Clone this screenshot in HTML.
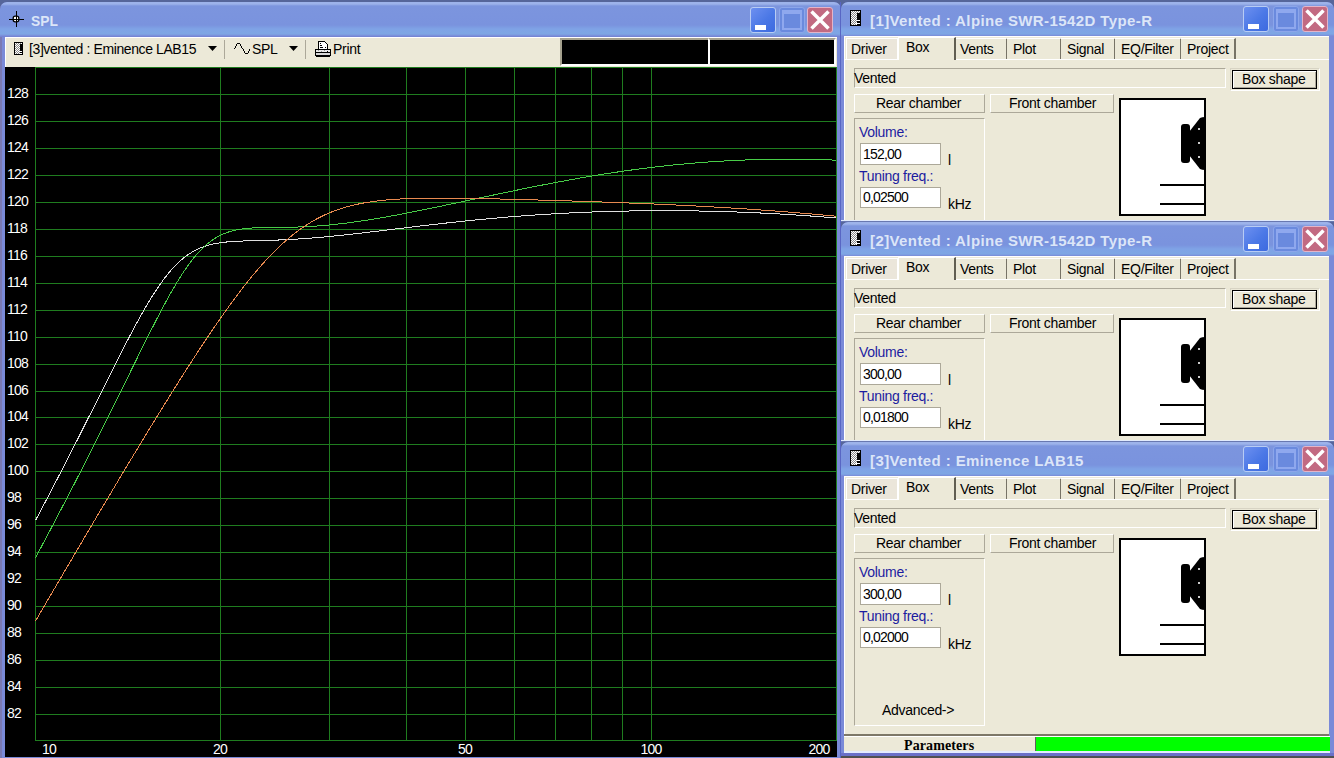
<!DOCTYPE html>
<html><head><meta charset="utf-8"><style>
*{box-sizing:border-box}
html,body{margin:0;padding:0}
body{width:1334px;height:758px;overflow:hidden;position:relative;background:#56669a;font-family:"Liberation Sans",sans-serif;font-size:14px;color:#000}
div{position:absolute}
.t{white-space:nowrap;font-size:14px;letter-spacing:-0.3px;line-height:16px}
.win{background:#7a8ad8;border-radius:7px 7px 0 0;overflow:hidden}
.title{position:absolute;background:linear-gradient(to bottom,#9db3ea 0px,#9db3ea 2px,#7c95de 4px,#7a93de 23px,#7fa3e6 27px,#7ea6e4 32px,#7a8ad8 34px,#7080d0 35px);border-radius:7px 7px 0 0}
.ttext{font-weight:bold;font-size:15px;color:#dce6f8;white-space:nowrap;line-height:18px;letter-spacing:0.4px}
.btn{width:26px;height:26px;border-radius:3px;border:1px solid #b8ccf4}
.bmin{background:linear-gradient(135deg,#6d90f0 0%,#4b78e6 55%,#3d6ae0 100%)}
.bmax{background:#6a8ade;border-color:#8ca6ea}
.bclose{background:#c26a82;border-color:#e4b4c8}
.minglyph{left:4px;top:17px;width:11px;height:5px;background:#fff}
.maxglyph{left:2px;top:2px;width:20px;height:20px;border:2px solid #8fa8ee;border-top-width:4px}
.bclose svg{position:absolute;left:-1px;top:-1px}
.client{background:#ece9d8;border-left:1px solid #fff;border-top:1px solid #fff}
.tab{background:#ece9d8;border-left:1px solid #fff;border-top:1px solid #fff;border-right:2px solid #777366}
.tab.sel{border-right:2px solid #615e52}
.sunk{border-top:1px solid #aca899;border-left:1px solid #aca899;border-right:1px solid #fff;border-bottom:1px solid #fff}
.btn3{background:#ece9d8;border-top:1px solid #fff;border-left:1px solid #fff;border-right:1px solid #aca899;border-bottom:1px solid #aca899}
.boxshape{border:1px solid #000;box-shadow:inset 1px 1px 0 #fff,inset -1px -1px 0 #aca899}
.group{border-top:1px solid #aca899;border-left:1px solid #aca899;border-right:1px solid #fff;border-bottom:1px solid #fff}
.edit{background:#fff;border:1px solid #aca899}
</style></head>
<body>
<div class="win" style="left:0;top:2px;width:841px;height:756px;background:#7a8ad8">
<div style="left:0;top:0;width:2px;height:756px;background:#7a7ab4"></div>
<div class="title" style="left:0;top:0;width:841px;height:35px"></div>
</div>
<svg style="position:absolute;left:0;top:0" width="30" height="30" viewBox="0 0 30 30" shape-rendering="crispEdges"><rect x="13.2" y="16.2" width="5.6" height="5.6" rx="2" fill="#fff" stroke="#000" stroke-width="1.3" shape-rendering="auto"/><rect x="16" y="11" width="1" height="16" fill="#000"/><rect x="9" y="19" width="15" height="1" fill="#000"/></svg>
<div class="ttext" style="left:31px;top:12px;transform:scaleX(0.92);transform-origin:0 0;letter-spacing:0">SPL</div>
<div class="btn bmin" style="left:750px;top:7px"><div class="minglyph"></div></div>
<div class="btn bmax" style="left:779px;top:7px"><div class="maxglyph"></div></div>
<div class="btn bclose" style="left:807px;top:7px"><svg width="26" height="26" viewBox="0 0 26 26"><path d="M4.5 4.5L21.5 21.5M21.5 4.5L4.5 21.5" stroke="#fff" stroke-width="3.5" stroke-linecap="butt"/></svg></div>
<div style="left:5px;top:37px;width:832px;height:30px;background:#ece9d8;border-top:1px solid #fff;border-left:1px solid #fff"></div>
<svg style="position:absolute;left:14px;top:42px" width="9" height="13" viewBox="0 0 9 13" shape-rendering="crispEdges"><rect x="0" y="0" width="9" height="13" fill="#000"/><rect x="1" y="1" width="1" height="1" fill="#fff"/><rect x="2" y="1" width="1" height="1" fill="#8a8a8a"/><rect x="3" y="1" width="1" height="1" fill="#fff"/><rect x="4" y="1" width="1" height="1" fill="#8a8a8a"/><rect x="5" y="1" width="1" height="1" fill="#fff"/><rect x="6" y="1" width="1" height="1" fill="#8a8a8a"/><rect x="7" y="1" width="1" height="1" fill="#fff"/><rect x="1" y="2" width="1" height="1" fill="#8a8a8a"/><rect x="2" y="2" width="1" height="1" fill="#fff"/><rect x="3" y="2" width="1" height="1" fill="#8a8a8a"/><rect x="4" y="2" width="1" height="1" fill="#fff"/><rect x="5" y="2" width="1" height="1" fill="#8a8a8a"/><rect x="1" y="3" width="1" height="1" fill="#fff"/><rect x="2" y="3" width="1" height="1" fill="#8a8a8a"/><rect x="3" y="3" width="1" height="1" fill="#fff"/><rect x="4" y="3" width="1" height="1" fill="#8a8a8a"/><rect x="5" y="3" width="1" height="1" fill="#fff"/><rect x="1" y="4" width="1" height="1" fill="#8a8a8a"/><rect x="2" y="4" width="1" height="1" fill="#fff"/><rect x="3" y="4" width="1" height="1" fill="#8a8a8a"/><rect x="4" y="4" width="1" height="1" fill="#fff"/><rect x="5" y="4" width="1" height="1" fill="#8a8a8a"/><rect x="1" y="5" width="1" height="1" fill="#fff"/><rect x="2" y="5" width="1" height="1" fill="#8a8a8a"/><rect x="3" y="5" width="1" height="1" fill="#fff"/><rect x="4" y="5" width="1" height="1" fill="#8a8a8a"/><rect x="5" y="5" width="1" height="1" fill="#fff"/><rect x="1" y="6" width="1" height="1" fill="#8a8a8a"/><rect x="2" y="6" width="1" height="1" fill="#fff"/><rect x="3" y="6" width="1" height="1" fill="#8a8a8a"/><rect x="4" y="6" width="1" height="1" fill="#fff"/><rect x="5" y="6" width="1" height="1" fill="#8a8a8a"/><rect x="1" y="7" width="1" height="1" fill="#fff"/><rect x="2" y="7" width="1" height="1" fill="#8a8a8a"/><rect x="3" y="7" width="1" height="1" fill="#fff"/><rect x="4" y="7" width="1" height="1" fill="#8a8a8a"/><rect x="5" y="7" width="1" height="1" fill="#fff"/><rect x="1" y="8" width="1" height="1" fill="#8a8a8a"/><rect x="2" y="8" width="1" height="1" fill="#fff"/><rect x="3" y="8" width="1" height="1" fill="#8a8a8a"/><rect x="4" y="8" width="1" height="1" fill="#fff"/><rect x="5" y="8" width="1" height="1" fill="#8a8a8a"/><rect x="1" y="9" width="1" height="1" fill="#fff"/><rect x="2" y="9" width="1" height="1" fill="#8a8a8a"/><rect x="3" y="9" width="1" height="1" fill="#fff"/><rect x="4" y="9" width="1" height="1" fill="#8a8a8a"/><rect x="5" y="9" width="1" height="1" fill="#fff"/><rect x="1" y="10" width="1" height="1" fill="#8a8a8a"/><rect x="2" y="10" width="1" height="1" fill="#fff"/><rect x="3" y="10" width="1" height="1" fill="#8a8a8a"/><rect x="4" y="10" width="1" height="1" fill="#fff"/><rect x="5" y="10" width="1" height="1" fill="#8a8a8a"/><rect x="1" y="11" width="1" height="1" fill="#fff"/><rect x="2" y="11" width="1" height="1" fill="#8a8a8a"/><rect x="3" y="11" width="1" height="1" fill="#fff"/><rect x="4" y="11" width="1" height="1" fill="#8a8a8a"/><rect x="5" y="11" width="1" height="1" fill="#fff"/><rect x="5" y="9" width="3" height="1" fill="#fff"/><rect x="5" y="11" width="3" height="1" fill="#fff"/></svg>
<div class="t" style="left:29px;top:41px;letter-spacing:-0.4px">[3]vented : Eminence LAB15</div>
<svg style="position:absolute;left:208px;top:46px" width="9" height="5" viewBox="0 0 9 5"><path d="M0 0H9L4.5 5Z" fill="#000"/></svg>
<div style="left:224px;top:40px;width:1px;height:19px;background:#aca899"></div>
<svg style="position:absolute;left:0;top:0" width="260" height="60" viewBox="0 0 260 60" shape-rendering="crispEdges"><g fill="#000"><rect x="234" y="48" width="1" height="1"/><rect x="235" y="46" width="1" height="2"/><rect x="236" y="44" width="1" height="2"/><rect x="237" y="43" width="3" height="1"/><rect x="240" y="44" width="1" height="2"/><rect x="241" y="46" width="1" height="2"/><rect x="242" y="48" width="1" height="1"/><rect x="243" y="49" width="1" height="2"/><rect x="244" y="51" width="1" height="2"/><rect x="245" y="53" width="3" height="1"/><rect x="248" y="51" width="1" height="2"/><rect x="249" y="49" width="1" height="2"/></g></svg>
<div class="t" style="left:252px;top:41px;">SPL</div>
<svg style="position:absolute;left:289px;top:46px" width="9" height="5" viewBox="0 0 9 5"><path d="M0 0H9L4.5 5Z" fill="#000"/></svg>
<div style="left:305px;top:40px;width:1px;height:19px;background:#aca899"></div>
<svg style="position:absolute;left:0;top:0" width="340" height="60" viewBox="0 0 340 60" shape-rendering="crispEdges">
<path d="M318.5 41.5H324.5L327.5 44.5V49.5H318.5Z" fill="#fff" stroke="#000"/>
<rect x="320" y="43" width="1" height="1" fill="#000"/><rect x="320" y="45" width="2" height="1" fill="#000"/><rect x="320" y="47" width="3" height="1" fill="#000"/><rect x="325" y="47" width="1" height="1" fill="#000"/>
<path d="M315.5 49.5H330.5V55.5H315.5Z" fill="#fff" stroke="#000"/>
<rect x="316" y="50" width="14" height="2" fill="#e8e8e8"/><rect x="318" y="50" width="1" height="1" fill="#999"/><rect x="321" y="51" width="1" height="1" fill="#999"/><rect x="324" y="50" width="1" height="1" fill="#999"/><rect x="327" y="51" width="1" height="1" fill="#000"/>
<rect x="316" y="52" width="14" height="1" fill="#000"/><rect x="316" y="53" width="14" height="2" fill="#d8d8d8"/><rect x="316" y="56" width="14" height="1" fill="#000"/>
</svg>
<div class="t" style="left:333px;top:41px;">Print</div>
<div style="left:560px;top:38px;width:148px;height:28px;background:#000;border-top:2px solid #a5a18e;border-left:2px solid #a5a18e;border-bottom:2px solid #fff"></div>
<div style="left:708px;top:38px;width:128px;height:28px;background:#000;border-top:2px solid #a5a18e;border-left:2px solid #fff;border-bottom:2px solid #fff;border-right:2px solid #fff"></div>
<svg style="position:absolute;left:5px;top:67px" width="832" height="690" viewBox="5 67 832 690">
<rect x="5" y="67" width="832" height="690" fill="#000"/>
<rect x="35" y="67" width="802" height="1" fill="#1f7c1f"/><rect x="35" y="94" width="802" height="1" fill="#1f7c1f"/><rect x="35" y="121" width="802" height="1" fill="#1f7c1f"/><rect x="35" y="148" width="802" height="1" fill="#1f7c1f"/><rect x="35" y="175" width="802" height="1" fill="#1f7c1f"/><rect x="35" y="202" width="802" height="1" fill="#1f7c1f"/><rect x="35" y="229" width="802" height="1" fill="#1f7c1f"/><rect x="35" y="256" width="802" height="1" fill="#1f7c1f"/><rect x="35" y="283" width="802" height="1" fill="#1f7c1f"/><rect x="35" y="310" width="802" height="1" fill="#1f7c1f"/><rect x="35" y="337" width="802" height="1" fill="#1f7c1f"/><rect x="35" y="364" width="802" height="1" fill="#1f7c1f"/><rect x="35" y="391" width="802" height="1" fill="#1f7c1f"/><rect x="35" y="417" width="802" height="1" fill="#1f7c1f"/><rect x="35" y="444" width="802" height="1" fill="#1f7c1f"/><rect x="35" y="471" width="802" height="1" fill="#1f7c1f"/><rect x="35" y="498" width="802" height="1" fill="#1f7c1f"/><rect x="35" y="525" width="802" height="1" fill="#1f7c1f"/><rect x="35" y="552" width="802" height="1" fill="#1f7c1f"/><rect x="35" y="579" width="802" height="1" fill="#1f7c1f"/><rect x="35" y="606" width="802" height="1" fill="#1f7c1f"/><rect x="35" y="633" width="802" height="1" fill="#1f7c1f"/><rect x="35" y="660" width="802" height="1" fill="#1f7c1f"/><rect x="35" y="687" width="802" height="1" fill="#1f7c1f"/><rect x="35" y="714" width="802" height="1" fill="#1f7c1f"/><rect x="35" y="740" width="802" height="1" fill="#1f7c1f"/><rect x="35" y="67" width="1" height="674" fill="#1f7c1f"/><rect x="220" y="67" width="1" height="674" fill="#1f7c1f"/><rect x="329" y="67" width="1" height="674" fill="#1f7c1f"/><rect x="406" y="67" width="1" height="674" fill="#1f7c1f"/><rect x="465" y="67" width="1" height="674" fill="#1f7c1f"/><rect x="514" y="67" width="1" height="674" fill="#1f7c1f"/><rect x="555" y="67" width="1" height="674" fill="#1f7c1f"/><rect x="591" y="67" width="1" height="674" fill="#1f7c1f"/><rect x="622" y="67" width="1" height="674" fill="#1f7c1f"/><rect x="651" y="67" width="1" height="674" fill="#1f7c1f"/><rect x="836" y="67" width="1" height="674" fill="#1f7c1f"/>
<g fill="#fff" font-family="Liberation Sans" font-size="14" letter-spacing="-0.8"><text x="7" y="98">128</text><text x="7" y="125">126</text><text x="7" y="152">124</text><text x="7" y="179">122</text><text x="7" y="206">120</text><text x="7" y="233">118</text><text x="7" y="260">116</text><text x="7" y="287">114</text><text x="7" y="314">112</text><text x="7" y="341">110</text><text x="7" y="368">108</text><text x="7" y="395">106</text><text x="7" y="421">104</text><text x="7" y="448">102</text><text x="7" y="475">100</text><text x="7" y="502">98</text><text x="7" y="529">96</text><text x="7" y="556">94</text><text x="7" y="583">92</text><text x="7" y="610">90</text><text x="7" y="637">88</text><text x="7" y="664">86</text><text x="7" y="691">84</text><text x="7" y="718">82</text><text x="49" y="754" text-anchor="middle">10</text><text x="220" y="754" text-anchor="middle">20</text><text x="465" y="754" text-anchor="middle">50</text><text x="651" y="754" text-anchor="middle">100</text><text x="819" y="754" text-anchor="middle">200</text></g>
<g fill="none" stroke-width="1" shape-rendering="crispEdges">
<polyline stroke="#e0e0e0" points="35.5,520.48 36.0,519.53 36.5,518.59 37.0,517.65 37.5,516.70 38.0,515.76 38.5,514.81 39.0,513.87 39.5,512.92 40.0,511.97 40.5,511.03 41.0,510.08 41.5,509.13 42.0,508.18 42.5,507.23 43.0,506.28 43.5,505.33 44.0,504.38 44.5,503.43 45.0,502.48 45.5,501.52 46.0,500.57 46.5,499.62 47.0,498.66 47.5,497.71 48.0,496.75 48.5,495.80 49.0,494.84 49.5,493.88 50.0,492.92 50.5,491.97 51.0,491.01 51.5,490.05 52.0,489.09 52.5,488.13 53.0,487.17 53.5,486.21 54.0,485.24 54.5,484.28 55.0,483.32 55.5,482.35 56.0,481.39 56.5,480.42 57.0,479.46 57.5,478.49 58.0,477.53 58.5,476.56 59.0,475.59 59.5,474.62 60.0,473.66 60.5,472.69 61.0,471.72 61.5,470.75 62.0,469.78 62.5,468.81 63.0,467.83 63.5,466.86 64.0,465.89 64.5,464.92 65.0,463.94 65.5,462.97 66.0,461.99 66.5,461.02 67.0,460.04 67.5,459.06 68.0,458.09 68.5,457.11 69.0,456.13 69.5,455.15 70.0,454.17 70.5,453.19 71.0,452.21 71.5,451.23 72.0,450.25 72.5,449.27 73.0,448.29 73.5,447.31 74.0,446.32 74.5,445.34 75.0,444.35 75.5,443.37 76.0,442.39 76.5,441.40 77.0,440.41 77.5,439.43 78.0,438.44 78.5,437.45 79.0,436.47 79.5,435.48 80.0,434.49 80.5,433.50 81.0,432.51 81.5,431.52 82.0,430.53 82.5,429.54 83.0,428.55 83.5,427.56 84.0,426.56 84.5,425.57 85.0,424.58 85.5,423.59 86.0,422.59 86.5,421.60 87.0,420.61 87.5,419.61 88.0,418.62 88.5,417.62 89.0,416.63 89.5,415.63 90.0,414.64 90.5,413.64 91.0,412.64 91.5,411.65 92.0,410.65 92.5,409.65 93.0,408.66 93.5,407.66 94.0,406.66 94.5,405.66 95.0,404.66 95.5,403.67 96.0,402.67 96.5,401.67 97.0,400.67 97.5,399.67 98.0,398.67 98.5,397.67 99.0,396.68 99.5,395.68 100.0,394.68 100.5,393.68 101.0,392.68 101.5,391.68 102.0,390.68 102.5,389.68 103.0,388.68 103.5,387.69 104.0,386.69 104.5,385.69 105.0,384.69 105.5,383.69 106.0,382.69 106.5,381.70 107.0,380.70 107.5,379.70 108.0,378.71 108.5,377.71 109.0,376.71 109.5,375.72 110.0,374.72 110.5,373.73 111.0,372.73 111.5,371.74 112.0,370.75 112.5,369.75 113.0,368.76 113.5,367.77 114.0,366.78 114.5,365.79 115.0,364.80 115.5,363.81 116.0,362.82 116.5,361.83 117.0,360.85 117.5,359.86 118.0,358.88 118.5,357.89 119.0,356.91 119.5,355.93 120.0,354.95 120.5,353.97 121.0,352.99 121.5,352.01 122.0,351.03 122.5,350.06 123.0,349.09 123.5,348.11 124.0,347.14 124.5,346.17 125.0,345.20 125.5,344.24 126.0,343.27 126.5,342.31 127.0,341.35 127.5,340.39 128.0,339.43 128.5,338.47 129.0,337.52 129.5,336.56 130.0,335.61 130.5,334.66 131.0,333.72 131.5,332.77 132.0,331.83 132.5,330.89 133.0,329.95 133.5,329.02 134.0,328.08 134.5,327.15 135.0,326.22 135.5,325.30 136.0,324.38 136.5,323.46 137.0,322.54 137.5,321.62 138.0,320.71 138.5,319.80 139.0,318.90 139.5,317.99 140.0,317.09 140.5,316.20 141.0,315.31 141.5,314.42 142.0,313.53 142.5,312.65 143.0,311.77 143.5,310.89 144.0,310.02 144.5,309.15 145.0,308.29 145.5,307.43 146.0,306.57 146.5,305.72 147.0,304.87 147.5,304.03 148.0,303.19 148.5,302.35 149.0,301.52 149.5,300.70 150.0,299.87 150.5,299.06 151.0,298.24 151.5,297.44 152.0,296.63 152.5,295.84 153.0,295.04 153.5,294.25 154.0,293.47 154.5,292.69 155.0,291.92 155.5,291.15 156.0,290.39 156.5,289.64 157.0,288.88 157.5,288.14 158.0,287.40 158.5,286.66 159.0,285.94 159.5,285.21 160.0,284.50 160.5,283.79 161.0,283.08 161.5,282.38 162.0,281.69 162.5,281.00 163.0,280.32 163.5,279.65 164.0,278.98 164.5,278.32 165.0,277.66 165.5,277.01 166.0,276.37 166.5,275.73 167.0,275.11 167.5,274.48 168.0,273.87 168.5,273.26 169.0,272.65 169.5,272.06 170.0,271.47 170.5,270.88 171.0,270.31 171.5,269.74 172.0,269.18 172.5,268.62 173.0,268.07 173.5,267.53 174.0,266.99 174.5,266.46 175.0,265.94 175.5,265.43 176.0,264.92 176.5,264.42 177.0,263.92 177.5,263.44 178.0,262.96 178.5,262.48 179.0,262.02 179.5,261.56 180.0,261.10 180.5,260.66 181.0,260.22 181.5,259.78 182.0,259.36 182.5,258.94 183.0,258.52 183.5,258.12 184.0,257.72 184.5,257.33 185.0,256.94 185.5,256.56 186.0,256.18 186.5,255.82 187.0,255.46 187.5,255.10 188.0,254.75 188.5,254.41 189.0,254.08 189.5,253.75 190.0,253.42 190.5,253.11 191.0,252.79 191.5,252.49 192.0,252.19 192.5,251.89 193.0,251.61 193.5,251.32 194.0,251.05 194.5,250.78 195.0,250.51 195.5,250.25 196.0,250.00 196.5,249.75 197.0,249.50 197.5,249.26 198.0,249.03 198.5,248.80 199.0,248.58 199.5,248.36 200.0,248.14 200.5,247.93 201.0,247.73 201.5,247.53 202.0,247.34 202.5,247.14 203.0,246.96 203.5,246.78 204.0,246.60 204.5,246.43 205.0,246.26 205.5,246.09 206.0,245.93 206.5,245.77 207.0,245.62 207.5,245.47 208.0,245.33 208.5,245.18 209.0,245.05 209.5,244.91 210.0,244.78 210.5,244.65 211.0,244.53 211.5,244.41 212.0,244.29 212.5,244.17 213.0,244.06 213.5,243.95 214.0,243.85 214.5,243.75 215.0,243.65 215.5,243.55 216.0,243.46 216.5,243.36 217.0,243.28 217.5,243.19 218.0,243.10 218.5,243.02 219.0,242.94 219.5,242.87 220.0,242.79 220.5,242.72 221.0,242.65 221.5,242.58 222.0,242.52 222.5,242.45 223.0,242.39 223.5,242.33 224.0,242.27 224.5,242.22 225.0,242.16 225.5,242.11 226.0,242.06 226.5,242.01 227.0,241.96 227.5,241.91 228.0,241.87 228.5,241.82 229.0,241.78 229.5,241.74 230.0,241.70 230.5,241.66 231.0,241.63 231.5,241.59 232.0,241.56 232.5,241.52 233.0,241.49 233.5,241.46 234.0,241.43 234.5,241.40 235.0,241.37 235.5,241.34 236.0,241.32 236.5,241.29 237.0,241.26 237.5,241.24 238.0,241.22 238.5,241.19 239.0,241.17 239.5,241.15 240.0,241.13 240.5,241.11 241.0,241.09 241.5,241.07 242.0,241.05 242.5,241.03 243.0,241.02 243.5,241.00 244.0,240.98 244.5,240.97 245.0,240.95 245.5,240.94 246.0,240.92 246.5,240.91 247.0,240.89 247.5,240.88 248.0,240.86 248.5,240.85 249.0,240.84 249.5,240.82 250.0,240.81 250.5,240.80 251.0,240.79 251.5,240.77 252.0,240.76 252.5,240.75 253.0,240.74 253.5,240.73 254.0,240.71 254.5,240.70 255.0,240.69 255.5,240.68 256.0,240.67 256.5,240.65 257.0,240.64 257.5,240.63 258.0,240.62 258.5,240.61 259.0,240.60 259.5,240.58 260.0,240.57 260.5,240.56 261.0,240.55 261.5,240.54 262.0,240.52 262.5,240.51 263.0,240.50 263.5,240.49 264.0,240.47 264.5,240.46 265.0,240.45 265.5,240.43 266.0,240.42 266.5,240.41 267.0,240.39 267.5,240.38 268.0,240.37 268.5,240.35 269.0,240.34 269.5,240.32 270.0,240.31 270.5,240.29 271.0,240.28 271.5,240.26 272.0,240.24 272.5,240.23 273.0,240.21 273.5,240.20 274.0,240.18 274.5,240.16 275.0,240.14 275.5,240.13 276.0,240.11 276.5,240.09 277.0,240.07 277.5,240.05 278.0,240.03 278.5,240.01 279.0,239.99 279.5,239.97 280.0,239.95 280.5,239.93 281.0,239.91 281.5,239.89 282.0,239.87 282.5,239.85 283.0,239.83 283.5,239.80 284.0,239.78 284.5,239.76 285.0,239.74 285.5,239.71 286.0,239.69 286.5,239.66 287.0,239.64 287.5,239.62 288.0,239.59 288.5,239.56 289.0,239.54 289.5,239.51 290.0,239.49 290.5,239.46 291.0,239.43 291.5,239.41 292.0,239.38 292.5,239.35 293.0,239.32 293.5,239.29 294.0,239.26 294.5,239.24 295.0,239.21 295.5,239.18 296.0,239.15 296.5,239.12 297.0,239.09 297.5,239.05 298.0,239.02 298.5,238.99 299.0,238.96 299.5,238.93 300.0,238.89 300.5,238.86 301.0,238.83 301.5,238.80 302.0,238.76 302.5,238.73 303.0,238.69 303.5,238.66 304.0,238.62 304.5,238.59 305.0,238.55 305.5,238.52 306.0,238.48 306.5,238.44 307.0,238.41 307.5,238.37 308.0,238.33 308.5,238.30 309.0,238.26 309.5,238.22 310.0,238.18 310.5,238.14 311.0,238.10 311.5,238.06 312.0,238.02 312.5,237.98 313.0,237.94 313.5,237.90 314.0,237.86 314.5,237.82 315.0,237.78 315.5,237.74 316.0,237.70 316.5,237.66 317.0,237.61 317.5,237.57 318.0,237.53 318.5,237.49 319.0,237.44 319.5,237.40 320.0,237.36 320.5,237.31 321.0,237.27 321.5,237.22 322.0,237.18 322.5,237.13 323.0,237.09 323.5,237.04 324.0,237.00 324.5,236.95 325.0,236.91 325.5,236.86 326.0,236.81 326.5,236.77 327.0,236.72 327.5,236.67 328.0,236.62 328.5,236.58 329.0,236.53 329.5,236.48 330.0,236.43 330.5,236.38 331.0,236.33 331.5,236.29 332.0,236.24 332.5,236.19 333.0,236.14 333.5,236.09 334.0,236.04 334.5,235.99 335.0,235.94 335.5,235.89 336.0,235.84 336.5,235.79 337.0,235.73 337.5,235.68 338.0,235.63 338.5,235.58 339.0,235.53 339.5,235.48 340.0,235.42 340.5,235.37 341.0,235.32 341.5,235.27 342.0,235.21 342.5,235.16 343.0,235.11 343.5,235.05 344.0,235.00 344.5,234.95 345.0,234.89 345.5,234.84 346.0,234.79 346.5,234.73 347.0,234.68 347.5,234.62 348.0,234.57 348.5,234.51 349.0,234.46 349.5,234.40 350.0,234.35 350.5,234.29 351.0,234.24 351.5,234.18 352.0,234.13 352.5,234.07 353.0,234.01 353.5,233.96 354.0,233.90 354.5,233.85 355.0,233.79 355.5,233.73 356.0,233.68 356.5,233.62 357.0,233.56 357.5,233.51 358.0,233.45 358.5,233.39 359.0,233.33 359.5,233.28 360.0,233.22 360.5,233.16 361.0,233.10 361.5,233.05 362.0,232.99 362.5,232.93 363.0,232.87 363.5,232.81 364.0,232.76 364.5,232.70 365.0,232.64 365.5,232.58 366.0,232.52 366.5,232.46 367.0,232.41 367.5,232.35 368.0,232.29 368.5,232.23 369.0,232.17 369.5,232.11 370.0,232.05 370.5,231.99 371.0,231.93 371.5,231.87 372.0,231.82 372.5,231.76 373.0,231.70 373.5,231.64 374.0,231.58 374.5,231.52 375.0,231.46 375.5,231.40 376.0,231.34 376.5,231.28 377.0,231.22 377.5,231.16 378.0,231.10 378.5,231.04 379.0,230.98 379.5,230.92 380.0,230.86 380.5,230.80 381.0,230.74 381.5,230.68 382.0,230.62 382.5,230.56 383.0,230.50 383.5,230.44 384.0,230.38 384.5,230.32 385.0,230.26 385.5,230.20 386.0,230.14 386.5,230.07 387.0,230.01 387.5,229.95 388.0,229.89 388.5,229.83 389.0,229.77 389.5,229.71 390.0,229.65 390.5,229.59 391.0,229.53 391.5,229.47 392.0,229.41 392.5,229.35 393.0,229.29 393.5,229.23 394.0,229.17 394.5,229.11 395.0,229.05 395.5,228.98 396.0,228.92 396.5,228.86 397.0,228.80 397.5,228.74 398.0,228.68 398.5,228.62 399.0,228.56 399.5,228.50 400.0,228.44 400.5,228.38 401.0,228.32 401.5,228.26 402.0,228.20 402.5,228.14 403.0,228.08 403.5,228.02 404.0,227.96 404.5,227.90 405.0,227.84 405.5,227.78 406.0,227.72 406.5,227.66 407.0,227.60 407.5,227.54 408.0,227.48 408.5,227.42 409.0,227.36 409.5,227.29 410.0,227.24 410.5,227.18 411.0,227.12 411.5,227.06 412.0,227.00 412.5,226.94 413.0,226.88 413.5,226.82 414.0,226.76 414.5,226.70 415.0,226.64 415.5,226.58 416.0,226.52 416.5,226.46 417.0,226.40 417.5,226.34 418.0,226.28 418.5,226.22 419.0,226.16 419.5,226.10 420.0,226.04 420.5,225.99 421.0,225.93 421.5,225.87 422.0,225.81 422.5,225.75 423.0,225.69 423.5,225.63 424.0,225.57 424.5,225.52 425.0,225.46 425.5,225.40 426.0,225.34 426.5,225.28 427.0,225.22 427.5,225.17 428.0,225.11 428.5,225.05 429.0,224.99 429.5,224.93 430.0,224.88 430.5,224.82 431.0,224.76 431.5,224.70 432.0,224.64 432.5,224.59 433.0,224.53 433.5,224.47 434.0,224.42 434.5,224.36 435.0,224.30 435.5,224.24 436.0,224.19 436.5,224.13 437.0,224.07 437.5,224.02 438.0,223.96 438.5,223.90 439.0,223.85 439.5,223.79 440.0,223.73 440.5,223.68 441.0,223.62 441.5,223.57 442.0,223.51 442.5,223.45 443.0,223.40 443.5,223.34 444.0,223.29 444.5,223.23 445.0,223.18 445.5,223.12 446.0,223.06 446.5,223.01 447.0,222.95 447.5,222.90 448.0,222.84 448.5,222.79 449.0,222.73 449.5,222.68 450.0,222.63 450.5,222.57 451.0,222.52 451.5,222.46 452.0,222.41 452.5,222.35 453.0,222.30 453.5,222.25 454.0,222.19 454.5,222.14 455.0,222.09 455.5,222.03 456.0,221.98 456.5,221.93 457.0,221.87 457.5,221.82 458.0,221.77 458.5,221.71 459.0,221.66 459.5,221.61 460.0,221.55 460.5,221.50 461.0,221.45 461.5,221.40 462.0,221.35 462.5,221.29 463.0,221.24 463.5,221.19 464.0,221.14 464.5,221.09 465.0,221.03 465.5,220.98 466.0,220.93 466.5,220.88 467.0,220.83 467.5,220.78 468.0,220.73 468.5,220.68 469.0,220.63 469.5,220.58 470.0,220.53 470.5,220.48 471.0,220.43 471.5,220.37 472.0,220.32 472.5,220.28 473.0,220.23 473.5,220.18 474.0,220.13 474.5,220.08 475.0,220.03 475.5,219.98 476.0,219.93 476.5,219.88 477.0,219.83 477.5,219.78 478.0,219.73 478.5,219.69 479.0,219.64 479.5,219.59 480.0,219.54 480.5,219.49 481.0,219.44 481.5,219.40 482.0,219.35 482.5,219.30 483.0,219.25 483.5,219.21 484.0,219.16 484.5,219.11 485.0,219.07 485.5,219.02 486.0,218.97 486.5,218.93 487.0,218.88 487.5,218.83 488.0,218.79 488.5,218.74 489.0,218.69 489.5,218.65 490.0,218.60 490.5,218.56 491.0,218.51 491.5,218.47 492.0,218.42 492.5,218.38 493.0,218.33 493.5,218.29 494.0,218.24 494.5,218.20 495.0,218.15 495.5,218.11 496.0,218.06 496.5,218.02 497.0,217.98 497.5,217.93 498.0,217.89 498.5,217.84 499.0,217.80 499.5,217.76 500.0,217.71 500.5,217.67 501.0,217.63 501.5,217.59 502.0,217.54 502.5,217.50 503.0,217.46 503.5,217.42 504.0,217.37 504.5,217.33 505.0,217.29 505.5,217.25 506.0,217.21 506.5,217.16 507.0,217.12 507.5,217.08 508.0,217.04 508.5,217.00 509.0,216.96 509.5,216.92 510.0,216.88 510.5,216.84 511.0,216.80 511.5,216.76 512.0,216.72 512.5,216.68 513.0,216.64 513.5,216.60 514.0,216.56 514.5,216.52 515.0,216.48 515.5,216.44 516.0,216.40 516.5,216.36 517.0,216.32 517.5,216.28 518.0,216.24 518.5,216.21 519.0,216.17 519.5,216.13 520.0,216.09 520.5,216.05 521.0,216.02 521.5,215.98 522.0,215.94 522.5,215.90 523.0,215.87 523.5,215.83 524.0,215.79 524.5,215.75 525.0,215.72 525.5,215.68 526.0,215.65 526.5,215.61 527.0,215.57 527.5,215.54 528.0,215.50 528.5,215.46 529.0,215.43 529.5,215.39 530.0,215.36 530.5,215.32 531.0,215.29 531.5,215.25 532.0,215.22 532.5,215.18 533.0,215.15 533.5,215.11 534.0,215.08 534.5,215.05 535.0,215.01 535.5,214.98 536.0,214.94 536.5,214.91 537.0,214.88 537.5,214.84 538.0,214.81 538.5,214.78 539.0,214.74 539.5,214.71 540.0,214.68 540.5,214.65 541.0,214.61 541.5,214.58 542.0,214.55 542.5,214.52 543.0,214.49 543.5,214.45 544.0,214.42 544.5,214.39 545.0,214.36 545.5,214.33 546.0,214.30 546.5,214.27 547.0,214.24 547.5,214.20 548.0,214.17 548.5,214.14 549.0,214.11 549.5,214.08 550.0,214.05 550.5,214.02 551.0,213.99 551.5,213.96 552.0,213.93 552.5,213.91 553.0,213.88 553.5,213.85 554.0,213.82 554.5,213.79 555.0,213.76 555.5,213.73 556.0,213.70 556.5,213.68 557.0,213.65 557.5,213.62 558.0,213.59 558.5,213.56 559.0,213.54 559.5,213.51 560.0,213.48 560.5,213.45 561.0,213.43 561.5,213.40 562.0,213.37 562.5,213.35 563.0,213.32 563.5,213.29 564.0,213.27 564.5,213.24 565.0,213.22 565.5,213.19 566.0,213.16 566.5,213.14 567.0,213.11 567.5,213.09 568.0,213.06 568.5,213.04 569.0,213.01 569.5,212.99 570.0,212.96 570.5,212.94 571.0,212.92 571.5,212.89 572.0,212.87 572.5,212.84 573.0,212.82 573.5,212.80 574.0,212.77 574.5,212.75 575.0,212.73 575.5,212.70 576.0,212.68 576.5,212.66 577.0,212.63 577.5,212.61 578.0,212.59 578.5,212.57 579.0,212.54 579.5,212.52 580.0,212.50 580.5,212.48 581.0,212.46 581.5,212.44 582.0,212.41 582.5,212.39 583.0,212.37 583.5,212.35 584.0,212.33 584.5,212.31 585.0,212.29 585.5,212.27 586.0,212.25 586.5,212.23 587.0,212.21 587.5,212.19 588.0,212.17 588.5,212.15 589.0,212.13 589.5,212.11 590.0,212.09 590.5,212.07 591.0,212.05 591.5,212.03 592.0,212.01 592.5,212.00 593.0,211.98 593.5,211.96 594.0,211.94 594.5,211.92 595.0,211.91 595.5,211.89 596.0,211.87 596.5,211.85 597.0,211.83 597.5,211.82 598.0,211.80 598.5,211.78 599.0,211.77 599.5,211.75 600.0,211.73 600.5,211.72 601.0,211.70 601.5,211.68 602.0,211.67 602.5,211.65 603.0,211.64 603.5,211.62 604.0,211.61 604.5,211.59 605.0,211.58 605.5,211.56 606.0,211.54 606.5,211.53 607.0,211.52 607.5,211.50 608.0,211.49 608.5,211.47 609.0,211.46 609.5,211.44 610.0,211.43 610.5,211.42 611.0,211.40 611.5,211.39 612.0,211.38 612.5,211.36 613.0,211.35 613.5,211.34 614.0,211.32 614.5,211.31 615.0,211.30 615.5,211.29 616.0,211.27 616.5,211.26 617.0,211.25 617.5,211.24 618.0,211.22 618.5,211.21 619.0,211.20 619.5,211.19 620.0,211.18 620.5,211.17 621.0,211.16 621.5,211.15 622.0,211.13 622.5,211.12 623.0,211.11 623.5,211.10 624.0,211.09 624.5,211.08 625.0,211.07 625.5,211.06 626.0,211.05 626.5,211.04 627.0,211.03 627.5,211.02 628.0,211.02 628.5,211.01 629.0,211.00 629.5,210.99 630.0,210.98 630.5,210.97 631.0,210.96 631.5,210.95 632.0,210.95 632.5,210.94 633.0,210.93 633.5,210.92 634.0,210.91 634.5,210.91 635.0,210.90 635.5,210.89 636.0,210.89 636.5,210.88 637.0,210.87 637.5,210.86 638.0,210.86 638.5,210.85 639.0,210.84 639.5,210.84 640.0,210.83 640.5,210.83 641.0,210.82 641.5,210.81 642.0,210.81 642.5,210.80 643.0,210.80 643.5,210.79 644.0,210.79 644.5,210.78 645.0,210.78 645.5,210.77 646.0,210.77 646.5,210.76 647.0,210.76 647.5,210.76 648.0,210.75 648.5,210.75 649.0,210.74 649.5,210.74 650.0,210.74 650.5,210.73 651.0,210.73 651.5,210.73 652.0,210.72 652.5,210.72 653.0,210.72 653.5,210.71 654.0,210.71 654.5,210.71 655.0,210.71 655.5,210.71 656.0,210.70 656.5,210.70 657.0,210.70 657.5,210.70 658.0,210.70 658.5,210.70 659.0,210.69 659.5,210.69 660.0,210.69 660.5,210.69 661.0,210.69 661.5,210.69 662.0,210.69 662.5,210.69 663.0,210.69 663.5,210.69 664.0,210.69 664.5,210.69 665.0,210.69 665.5,210.69 666.0,210.69 666.5,210.69 667.0,210.69 667.5,210.69 668.0,210.69 668.5,210.69 669.0,210.69 669.5,210.70 670.0,210.70 670.5,210.70 671.0,210.70 671.5,210.70 672.0,210.70 672.5,210.71 673.0,210.71 673.5,210.71 674.0,210.71 674.5,210.72 675.0,210.72 675.5,210.72 676.0,210.72 676.5,210.73 677.0,210.73 677.5,210.73 678.0,210.74 678.5,210.74 679.0,210.75 679.5,210.75 680.0,210.75 680.5,210.76 681.0,210.76 681.5,210.77 682.0,210.77 682.5,210.77 683.0,210.78 683.5,210.78 684.0,210.79 684.5,210.79 685.0,210.80 685.5,210.81 686.0,210.81 686.5,210.82 687.0,210.82 687.5,210.83 688.0,210.83 688.5,210.84 689.0,210.85 689.5,210.85 690.0,210.86 690.5,210.87 691.0,210.87 691.5,210.88 692.0,210.89 692.5,210.89 693.0,210.90 693.5,210.91 694.0,210.92 694.5,210.92 695.0,210.93 695.5,210.94 696.0,210.95 696.5,210.95 697.0,210.96 697.5,210.97 698.0,210.98 698.5,210.99 699.0,211.00 699.5,211.01 700.0,211.01 700.5,211.02 701.0,211.03 701.5,211.04 702.0,211.05 702.5,211.06 703.0,211.07 703.5,211.08 704.0,211.09 704.5,211.10 705.0,211.11 705.5,211.12 706.0,211.13 706.5,211.14 707.0,211.15 707.5,211.16 708.0,211.17 708.5,211.19 709.0,211.20 709.5,211.21 710.0,211.22 710.5,211.23 711.0,211.24 711.5,211.25 712.0,211.27 712.5,211.28 713.0,211.29 713.5,211.30 714.0,211.32 714.5,211.33 715.0,211.34 715.5,211.35 716.0,211.37 716.5,211.38 717.0,211.39 717.5,211.41 718.0,211.42 718.5,211.43 719.0,211.45 719.5,211.46 720.0,211.47 720.5,211.49 721.0,211.50 721.5,211.52 722.0,211.53 722.5,211.54 723.0,211.56 723.5,211.57 724.0,211.59 724.5,211.60 725.0,211.62 725.5,211.63 726.0,211.65 726.5,211.67 727.0,211.68 727.5,211.70 728.0,211.71 728.5,211.73 729.0,211.74 729.5,211.76 730.0,211.78 730.5,211.79 731.0,211.81 731.5,211.83 732.0,211.84 732.5,211.86 733.0,211.88 733.5,211.89 734.0,211.91 734.5,211.93 735.0,211.95 735.5,211.96 736.0,211.98 736.5,212.00 737.0,212.02 737.5,212.04 738.0,212.05 738.5,212.07 739.0,212.09 739.5,212.11 740.0,212.13 740.5,212.15 741.0,212.17 741.5,212.19 742.0,212.21 742.5,212.23 743.0,212.24 743.5,212.26 744.0,212.28 744.5,212.30 745.0,212.32 745.5,212.34 746.0,212.36 746.5,212.38 747.0,212.41 747.5,212.43 748.0,212.45 748.5,212.47 749.0,212.49 749.5,212.51 750.0,212.53 750.5,212.55 751.0,212.57 751.5,212.60 752.0,212.62 752.5,212.64 753.0,212.66 753.5,212.68 754.0,212.71 754.5,212.73 755.0,212.75 755.5,212.77 756.0,212.80 756.5,212.82 757.0,212.84 757.5,212.86 758.0,212.89 758.5,212.91 759.0,212.93 759.5,212.96 760.0,212.98 760.5,213.01 761.0,213.03 761.5,213.05 762.0,213.08 762.5,213.10 763.0,213.13 763.5,213.15 764.0,213.18 764.5,213.20 765.0,213.22 765.5,213.25 766.0,213.28 766.5,213.30 767.0,213.33 767.5,213.35 768.0,213.38 768.5,213.40 769.0,213.43 769.5,213.45 770.0,213.48 770.5,213.51 771.0,213.53 771.5,213.56 772.0,213.59 772.5,213.61 773.0,213.64 773.5,213.67 774.0,213.69 774.5,213.72 775.0,213.75 775.5,213.78 776.0,213.80 776.5,213.83 777.0,213.86 777.5,213.89 778.0,213.92 778.5,213.94 779.0,213.97 779.5,214.00 780.0,214.03 780.5,214.06 781.0,214.09 781.5,214.12 782.0,214.15 782.5,214.17 783.0,214.20 783.5,214.23 784.0,214.26 784.5,214.29 785.0,214.32 785.5,214.35 786.0,214.38 786.5,214.41 787.0,214.44 787.5,214.47 788.0,214.50 788.5,214.54 789.0,214.57 789.5,214.60 790.0,214.63 790.5,214.66 791.0,214.69 791.5,214.72 792.0,214.75 792.5,214.79 793.0,214.82 793.5,214.85 794.0,214.88 794.5,214.91 795.0,214.95 795.5,214.98 796.0,215.01 796.5,215.04 797.0,215.08 797.5,215.11 798.0,215.14 798.5,215.18 799.0,215.21 799.5,215.24 800.0,215.28 800.5,215.31 801.0,215.34 801.5,215.38 802.0,215.41 802.5,215.45 803.0,215.48 803.5,215.51 804.0,215.55 804.5,215.58 805.0,215.62 805.5,215.65 806.0,215.69 806.5,215.72 807.0,215.76 807.5,215.79 808.0,215.83 808.5,215.87 809.0,215.90 809.5,215.94 810.0,215.97 810.5,216.01 811.0,216.05 811.5,216.08 812.0,216.12 812.5,216.16 813.0,216.19 813.5,216.23 814.0,216.27 814.5,216.30 815.0,216.34 815.5,216.38 816.0,216.42 816.5,216.45 817.0,216.49 817.5,216.53 818.0,216.57 818.5,216.61 819.0,216.64 819.5,216.68 820.0,216.72 820.5,216.76 821.0,216.80 821.5,216.84 822.0,216.88 822.5,216.92 823.0,216.96 823.5,216.99 824.0,217.03 824.5,217.07 825.0,217.11 825.5,217.15 826.0,217.19 826.5,217.23 827.0,217.27 827.5,217.32 828.0,217.36 828.5,217.40 829.0,217.44 829.5,217.48 830.0,217.52 830.5,217.56 831.0,217.60 831.5,217.64 832.0,217.69 832.5,217.73 833.0,217.77 833.5,217.81 834.0,217.85 834.5,217.90 835.0,217.94 835.5,217.98 836.0,218.02 836.5,218.07"/>
<polyline stroke="#48cc48" points="35.5,557.73 36.0,556.80 36.5,555.86 37.0,554.92 37.5,553.99 38.0,553.05 38.5,552.11 39.0,551.17 39.5,550.23 40.0,549.30 40.5,548.36 41.0,547.42 41.5,546.48 42.0,545.54 42.5,544.59 43.0,543.65 43.5,542.71 44.0,541.77 44.5,540.83 45.0,539.88 45.5,538.94 46.0,538.00 46.5,537.05 47.0,536.11 47.5,535.16 48.0,534.22 48.5,533.27 49.0,532.32 49.5,531.38 50.0,530.43 50.5,529.48 51.0,528.53 51.5,527.58 52.0,526.64 52.5,525.69 53.0,524.74 53.5,523.79 54.0,522.83 54.5,521.88 55.0,520.93 55.5,519.98 56.0,519.03 56.5,518.07 57.0,517.12 57.5,516.17 58.0,515.21 58.5,514.26 59.0,513.30 59.5,512.35 60.0,511.39 60.5,510.43 61.0,509.47 61.5,508.52 62.0,507.56 62.5,506.60 63.0,505.64 63.5,504.68 64.0,503.72 64.5,502.76 65.0,501.80 65.5,500.84 66.0,499.87 66.5,498.91 67.0,497.95 67.5,496.98 68.0,496.02 68.5,495.06 69.0,494.09 69.5,493.13 70.0,492.16 70.5,491.19 71.0,490.23 71.5,489.26 72.0,488.29 72.5,487.32 73.0,486.35 73.5,485.38 74.0,484.41 74.5,483.44 75.0,482.47 75.5,481.50 76.0,480.52 76.5,479.55 77.0,478.58 77.5,477.60 78.0,476.63 78.5,475.66 79.0,474.68 79.5,473.70 80.0,472.73 80.5,471.75 81.0,470.77 81.5,469.79 82.0,468.82 82.5,467.84 83.0,466.86 83.5,465.88 84.0,464.90 84.5,463.91 85.0,462.93 85.5,461.95 86.0,460.97 86.5,459.98 87.0,459.00 87.5,458.01 88.0,457.03 88.5,456.04 89.0,455.06 89.5,454.07 90.0,453.08 90.5,452.10 91.0,451.11 91.5,450.12 92.0,449.13 92.5,448.14 93.0,447.15 93.5,446.16 94.0,445.17 94.5,444.17 95.0,443.18 95.5,442.19 96.0,441.20 96.5,440.20 97.0,439.21 97.5,438.21 98.0,437.22 98.5,436.22 99.0,435.22 99.5,434.23 100.0,433.23 100.5,432.23 101.0,431.23 101.5,430.23 102.0,429.23 102.5,428.23 103.0,427.23 103.5,426.23 104.0,425.23 104.5,424.23 105.0,423.22 105.5,422.22 106.0,421.22 106.5,420.21 107.0,419.21 107.5,418.20 108.0,417.20 108.5,416.19 109.0,415.19 109.5,414.18 110.0,413.17 110.5,412.16 111.0,411.16 111.5,410.15 112.0,409.14 112.5,408.13 113.0,407.12 113.5,406.11 114.0,405.10 114.5,404.09 115.0,403.08 115.5,402.07 116.0,401.06 116.5,400.04 117.0,399.03 117.5,398.02 118.0,397.01 118.5,395.99 119.0,394.98 119.5,393.97 120.0,392.95 120.5,391.94 121.0,390.92 121.5,389.91 122.0,388.89 122.5,387.88 123.0,386.86 123.5,385.85 124.0,384.83 124.5,383.82 125.0,382.80 125.5,381.78 126.0,380.77 126.5,379.75 127.0,378.74 127.5,377.72 128.0,376.70 128.5,375.69 129.0,374.67 129.5,373.65 130.0,372.64 130.5,371.62 131.0,370.61 131.5,369.59 132.0,368.57 132.5,367.56 133.0,366.54 133.5,365.53 134.0,364.51 134.5,363.50 135.0,362.48 135.5,361.47 136.0,360.45 136.5,359.44 137.0,358.43 137.5,357.42 138.0,356.40 138.5,355.39 139.0,354.38 139.5,353.37 140.0,352.36 140.5,351.35 141.0,350.34 141.5,349.33 142.0,348.32 142.5,347.32 143.0,346.31 143.5,345.30 144.0,344.30 144.5,343.29 145.0,342.29 145.5,341.29 146.0,340.29 146.5,339.29 147.0,338.29 147.5,337.29 148.0,336.30 148.5,335.30 149.0,334.31 149.5,333.31 150.0,332.32 150.5,331.33 151.0,330.34 151.5,329.35 152.0,328.37 152.5,327.38 153.0,326.40 153.5,325.42 154.0,324.44 154.5,323.46 155.0,322.49 155.5,321.51 156.0,320.54 156.5,319.57 157.0,318.60 157.5,317.64 158.0,316.68 158.5,315.71 159.0,314.76 159.5,313.80 160.0,312.85 160.5,311.89 161.0,310.95 161.5,310.00 162.0,309.06 162.5,308.11 163.0,307.18 163.5,306.24 164.0,305.31 164.5,304.38 165.0,303.45 165.5,302.53 166.0,301.61 166.5,300.70 167.0,299.78 167.5,298.87 168.0,297.97 168.5,297.07 169.0,296.17 169.5,295.27 170.0,294.38 170.5,293.50 171.0,292.61 171.5,291.74 172.0,290.86 172.5,289.99 173.0,289.13 173.5,288.26 174.0,287.41 174.5,286.56 175.0,285.71 175.5,284.86 176.0,284.03 176.5,283.19 177.0,282.37 177.5,281.54 178.0,280.72 178.5,279.91 179.0,279.10 179.5,278.30 180.0,277.50 180.5,276.71 181.0,275.93 181.5,275.15 182.0,274.37 182.5,273.60 183.0,272.84 183.5,272.09 184.0,271.33 184.5,270.59 185.0,269.85 185.5,269.12 186.0,268.39 186.5,267.67 187.0,266.96 187.5,266.25 188.0,265.55 188.5,264.86 189.0,264.17 189.5,263.49 190.0,262.82 190.5,262.15 191.0,261.49 191.5,260.84 192.0,260.20 192.5,259.56 193.0,258.93 193.5,258.30 194.0,257.68 194.5,257.07 195.0,256.47 195.5,255.87 196.0,255.28 196.5,254.70 197.0,254.13 197.5,253.56 198.0,253.00 198.5,252.45 199.0,251.91 199.5,251.37 200.0,250.84 200.5,250.32 201.0,249.80 201.5,249.29 202.0,248.79 202.5,248.30 203.0,247.81 203.5,247.33 204.0,246.86 204.5,246.40 205.0,245.94 205.5,245.49 206.0,245.05 206.5,244.62 207.0,244.19 207.5,243.77 208.0,243.36 208.5,242.95 209.0,242.55 209.5,242.16 210.0,241.78 210.5,241.40 211.0,241.03 211.5,240.67 212.0,240.31 212.5,239.96 213.0,239.62 213.5,239.28 214.0,238.95 214.5,238.63 215.0,238.31 215.5,238.00 216.0,237.70 216.5,237.40 217.0,237.11 217.5,236.83 218.0,236.55 218.5,236.28 219.0,236.01 219.5,235.75 220.0,235.50 220.5,235.25 221.0,235.00 221.5,234.77 222.0,234.53 222.5,234.31 223.0,234.09 223.5,233.87 224.0,233.66 224.5,233.46 225.0,233.26 225.5,233.06 226.0,232.87 226.5,232.69 227.0,232.51 227.5,232.33 228.0,232.16 228.5,232.00 229.0,231.84 229.5,231.68 230.0,231.53 230.5,231.38 231.0,231.24 231.5,231.10 232.0,230.96 232.5,230.83 233.0,230.70 233.5,230.58 234.0,230.45 234.5,230.34 235.0,230.22 235.5,230.11 236.0,230.01 236.5,229.91 237.0,229.81 237.5,229.71 238.0,229.62 238.5,229.53 239.0,229.44 239.5,229.35 240.0,229.27 240.5,229.19 241.0,229.12 241.5,229.04 242.0,228.97 242.5,228.90 243.0,228.84 243.5,228.78 244.0,228.71 244.5,228.66 245.0,228.60 245.5,228.54 246.0,228.49 246.5,228.44 247.0,228.39 247.5,228.35 248.0,228.30 248.5,228.26 249.0,228.22 249.5,228.18 250.0,228.14 250.5,228.11 251.0,228.07 251.5,228.04 252.0,228.01 252.5,227.98 253.0,227.95 253.5,227.92 254.0,227.89 254.5,227.87 255.0,227.85 255.5,227.82 256.0,227.80 256.5,227.78 257.0,227.76 257.5,227.74 258.0,227.72 258.5,227.71 259.0,227.69 259.5,227.68 260.0,227.66 260.5,227.65 261.0,227.64 261.5,227.62 262.0,227.61 262.5,227.60 263.0,227.59 263.5,227.58 264.0,227.57 264.5,227.56 265.0,227.55 265.5,227.54 266.0,227.54 266.5,227.53 267.0,227.52 267.5,227.52 268.0,227.51 268.5,227.50 269.0,227.50 269.5,227.49 270.0,227.49 270.5,227.48 271.0,227.48 271.5,227.47 272.0,227.47 272.5,227.46 273.0,227.46 273.5,227.45 274.0,227.45 274.5,227.44 275.0,227.44 275.5,227.43 276.0,227.43 276.5,227.43 277.0,227.42 277.5,227.42 278.0,227.41 278.5,227.41 279.0,227.40 279.5,227.40 280.0,227.39 280.5,227.38 281.0,227.38 281.5,227.37 282.0,227.37 282.5,227.36 283.0,227.35 283.5,227.35 284.0,227.34 284.5,227.33 285.0,227.32 285.5,227.32 286.0,227.31 286.5,227.30 287.0,227.29 287.5,227.28 288.0,227.27 288.5,227.26 289.0,227.25 289.5,227.24 290.0,227.23 290.5,227.22 291.0,227.21 291.5,227.20 292.0,227.18 292.5,227.17 293.0,227.16 293.5,227.14 294.0,227.13 294.5,227.11 295.0,227.10 295.5,227.08 296.0,227.07 296.5,227.05 297.0,227.04 297.5,227.02 298.0,227.00 298.5,226.98 299.0,226.97 299.5,226.95 300.0,226.93 300.5,226.91 301.0,226.89 301.5,226.87 302.0,226.85 302.5,226.83 303.0,226.80 303.5,226.78 304.0,226.76 304.5,226.73 305.0,226.71 305.5,226.69 306.0,226.66 306.5,226.64 307.0,226.61 307.5,226.58 308.0,226.56 308.5,226.53 309.0,226.50 309.5,226.47 310.0,226.44 310.5,226.41 311.0,226.38 311.5,226.35 312.0,226.32 312.5,226.29 313.0,226.26 313.5,226.23 314.0,226.20 314.5,226.16 315.0,226.13 315.5,226.09 316.0,226.06 316.5,226.02 317.0,225.99 317.5,225.95 318.0,225.92 318.5,225.88 319.0,225.84 319.5,225.80 320.0,225.76 320.5,225.72 321.0,225.68 321.5,225.64 322.0,225.60 322.5,225.56 323.0,225.52 323.5,225.48 324.0,225.44 324.5,225.39 325.0,225.35 325.5,225.30 326.0,225.26 326.5,225.21 327.0,225.17 327.5,225.12 328.0,225.08 328.5,225.03 329.0,224.98 329.5,224.93 330.0,224.89 330.5,224.84 331.0,224.79 331.5,224.74 332.0,224.69 332.5,224.64 333.0,224.59 333.5,224.53 334.0,224.48 334.5,224.43 335.0,224.38 335.5,224.32 336.0,224.27 336.5,224.21 337.0,224.16 337.5,224.10 338.0,224.05 338.5,223.99 339.0,223.94 339.5,223.88 340.0,223.82 340.5,223.76 341.0,223.70 341.5,223.65 342.0,223.59 342.5,223.53 343.0,223.47 343.5,223.41 344.0,223.35 344.5,223.28 345.0,223.22 345.5,223.16 346.0,223.10 346.5,223.04 347.0,222.97 347.5,222.91 348.0,222.84 348.5,222.78 349.0,222.71 349.5,222.65 350.0,222.58 350.5,222.52 351.0,222.45 351.5,222.38 352.0,222.32 352.5,222.25 353.0,222.18 353.5,222.11 354.0,222.04 354.5,221.97 355.0,221.91 355.5,221.84 356.0,221.77 356.5,221.69 357.0,221.62 357.5,221.55 358.0,221.48 358.5,221.41 359.0,221.34 359.5,221.26 360.0,221.19 360.5,221.12 361.0,221.04 361.5,220.97 362.0,220.89 362.5,220.82 363.0,220.74 363.5,220.67 364.0,220.59 364.5,220.52 365.0,220.44 365.5,220.36 366.0,220.29 366.5,220.21 367.0,220.13 367.5,220.05 368.0,219.97 368.5,219.89 369.0,219.82 369.5,219.74 370.0,219.66 370.5,219.58 371.0,219.50 371.5,219.42 372.0,219.33 372.5,219.25 373.0,219.17 373.5,219.09 374.0,219.01 374.5,218.93 375.0,218.84 375.5,218.76 376.0,218.68 376.5,218.59 377.0,218.51 377.5,218.43 378.0,218.34 378.5,218.26 379.0,218.17 379.5,218.09 380.0,218.00 380.5,217.92 381.0,217.83 381.5,217.74 382.0,217.66 382.5,217.57 383.0,217.48 383.5,217.40 384.0,217.31 384.5,217.22 385.0,217.13 385.5,217.04 386.0,216.96 386.5,216.87 387.0,216.78 387.5,216.69 388.0,216.60 388.5,216.51 389.0,216.42 389.5,216.33 390.0,216.24 390.5,216.15 391.0,216.06 391.5,215.97 392.0,215.88 392.5,215.78 393.0,215.69 393.5,215.60 394.0,215.51 394.5,215.42 395.0,215.32 395.5,215.23 396.0,215.14 396.5,215.05 397.0,214.95 397.5,214.86 398.0,214.77 398.5,214.67 399.0,214.58 399.5,214.48 400.0,214.39 400.5,214.29 401.0,214.20 401.5,214.10 402.0,214.01 402.5,213.91 403.0,213.82 403.5,213.72 404.0,213.63 404.5,213.53 405.0,213.43 405.5,213.34 406.0,213.24 406.5,213.14 407.0,213.05 407.5,212.95 408.0,212.85 408.5,212.75 409.0,212.66 409.5,212.56 410.0,212.46 410.5,212.36 411.0,212.26 411.5,212.17 412.0,212.07 412.5,211.97 413.0,211.87 413.5,211.77 414.0,211.67 414.5,211.57 415.0,211.47 415.5,211.37 416.0,211.27 416.5,211.17 417.0,211.07 417.5,210.97 418.0,210.87 418.5,210.77 419.0,210.67 419.5,210.57 420.0,210.47 420.5,210.37 421.0,210.27 421.5,210.17 422.0,210.07 422.5,209.97 423.0,209.86 423.5,209.76 424.0,209.66 424.5,209.56 425.0,209.46 425.5,209.36 426.0,209.25 426.5,209.15 427.0,209.05 427.5,208.95 428.0,208.84 428.5,208.74 429.0,208.64 429.5,208.54 430.0,208.43 430.5,208.33 431.0,208.23 431.5,208.12 432.0,208.02 432.5,207.92 433.0,207.81 433.5,207.71 434.0,207.61 434.5,207.50 435.0,207.40 435.5,207.29 436.0,207.19 436.5,207.09 437.0,206.98 437.5,206.88 438.0,206.77 438.5,206.67 439.0,206.57 439.5,206.46 440.0,206.36 440.5,206.25 441.0,206.15 441.5,206.04 442.0,205.94 442.5,205.83 443.0,205.73 443.5,205.62 444.0,205.52 444.5,205.41 445.0,205.31 445.5,205.20 446.0,205.10 446.5,204.99 447.0,204.89 447.5,204.78 448.0,204.67 448.5,204.57 449.0,204.46 449.5,204.36 450.0,204.25 450.5,204.15 451.0,204.04 451.5,203.93 452.0,203.83 452.5,203.72 453.0,203.62 453.5,203.51 454.0,203.40 454.5,203.30 455.0,203.19 455.5,203.09 456.0,202.98 456.5,202.87 457.0,202.77 457.5,202.66 458.0,202.55 458.5,202.45 459.0,202.34 459.5,202.24 460.0,202.13 460.5,202.02 461.0,201.92 461.5,201.81 462.0,201.70 462.5,201.60 463.0,201.49 463.5,201.38 464.0,201.28 464.5,201.17 465.0,201.06 465.5,200.96 466.0,200.85 466.5,200.74 467.0,200.64 467.5,200.53 468.0,200.43 468.5,200.32 469.0,200.21 469.5,200.11 470.0,200.00 470.5,199.89 471.0,199.79 471.5,199.68 472.0,199.57 472.5,199.47 473.0,199.36 473.5,199.25 474.0,199.15 474.5,199.04 475.0,198.93 475.5,198.83 476.0,198.72 476.5,198.61 477.0,198.51 477.5,198.40 478.0,198.29 478.5,198.19 479.0,198.08 479.5,197.97 480.0,197.87 480.5,197.76 481.0,197.66 481.5,197.55 482.0,197.44 482.5,197.34 483.0,197.23 483.5,197.12 484.0,197.02 484.5,196.91 485.0,196.81 485.5,196.70 486.0,196.59 486.5,196.49 487.0,196.38 487.5,196.27 488.0,196.17 488.5,196.06 489.0,195.96 489.5,195.85 490.0,195.75 490.5,195.64 491.0,195.53 491.5,195.43 492.0,195.32 492.5,195.22 493.0,195.11 493.5,195.01 494.0,194.90 494.5,194.79 495.0,194.69 495.5,194.58 496.0,194.48 496.5,194.37 497.0,194.27 497.5,194.16 498.0,194.06 498.5,193.95 499.0,193.85 499.5,193.74 500.0,193.64 500.5,193.53 501.0,193.43 501.5,193.32 502.0,193.22 502.5,193.11 503.0,193.01 503.5,192.90 504.0,192.80 504.5,192.70 505.0,192.59 505.5,192.49 506.0,192.38 506.5,192.28 507.0,192.18 507.5,192.07 508.0,191.97 508.5,191.86 509.0,191.76 509.5,191.66 510.0,191.55 510.5,191.45 511.0,191.35 511.5,191.24 512.0,191.14 512.5,191.03 513.0,190.93 513.5,190.83 514.0,190.73 514.5,190.62 515.0,190.52 515.5,190.42 516.0,190.31 516.5,190.21 517.0,190.11 517.5,190.01 518.0,189.90 518.5,189.80 519.0,189.70 519.5,189.60 520.0,189.49 520.5,189.39 521.0,189.29 521.5,189.19 522.0,189.09 522.5,188.99 523.0,188.88 523.5,188.78 524.0,188.68 524.5,188.58 525.0,188.48 525.5,188.38 526.0,188.28 526.5,188.18 527.0,188.07 527.5,187.97 528.0,187.87 528.5,187.77 529.0,187.67 529.5,187.57 530.0,187.47 530.5,187.37 531.0,187.27 531.5,187.17 532.0,187.07 532.5,186.97 533.0,186.87 533.5,186.77 534.0,186.67 534.5,186.57 535.0,186.48 535.5,186.38 536.0,186.28 536.5,186.18 537.0,186.08 537.5,185.98 538.0,185.88 538.5,185.78 539.0,185.69 539.5,185.59 540.0,185.49 540.5,185.39 541.0,185.29 541.5,185.20 542.0,185.10 542.5,185.00 543.0,184.90 543.5,184.81 544.0,184.71 544.5,184.61 545.0,184.51 545.5,184.42 546.0,184.32 546.5,184.22 547.0,184.13 547.5,184.03 548.0,183.94 548.5,183.84 549.0,183.74 549.5,183.65 550.0,183.55 550.5,183.46 551.0,183.36 551.5,183.27 552.0,183.17 552.5,183.08 553.0,182.98 553.5,182.89 554.0,182.79 554.5,182.70 555.0,182.60 555.5,182.51 556.0,182.41 556.5,182.32 557.0,182.23 557.5,182.13 558.0,182.04 558.5,181.94 559.0,181.85 559.5,181.76 560.0,181.66 560.5,181.57 561.0,181.48 561.5,181.39 562.0,181.29 562.5,181.20 563.0,181.11 563.5,181.02 564.0,180.93 564.5,180.83 565.0,180.74 565.5,180.65 566.0,180.56 566.5,180.47 567.0,180.38 567.5,180.29 568.0,180.19 568.5,180.10 569.0,180.01 569.5,179.92 570.0,179.83 570.5,179.74 571.0,179.65 571.5,179.56 572.0,179.47 572.5,179.38 573.0,179.29 573.5,179.21 574.0,179.12 574.5,179.03 575.0,178.94 575.5,178.85 576.0,178.76 576.5,178.67 577.0,178.59 577.5,178.50 578.0,178.41 578.5,178.32 579.0,178.23 579.5,178.15 580.0,178.06 580.5,177.97 581.0,177.89 581.5,177.80 582.0,177.71 582.5,177.63 583.0,177.54 583.5,177.45 584.0,177.37 584.5,177.28 585.0,177.20 585.5,177.11 586.0,177.03 586.5,176.94 587.0,176.86 587.5,176.77 588.0,176.69 588.5,176.60 589.0,176.52 589.5,176.43 590.0,176.35 590.5,176.27 591.0,176.18 591.5,176.10 592.0,176.02 592.5,175.93 593.0,175.85 593.5,175.77 594.0,175.69 594.5,175.60 595.0,175.52 595.5,175.44 596.0,175.36 596.5,175.28 597.0,175.19 597.5,175.11 598.0,175.03 598.5,174.95 599.0,174.87 599.5,174.79 600.0,174.71 600.5,174.63 601.0,174.55 601.5,174.47 602.0,174.39 602.5,174.31 603.0,174.23 603.5,174.15 604.0,174.07 604.5,173.99 605.0,173.91 605.5,173.84 606.0,173.76 606.5,173.68 607.0,173.60 607.5,173.52 608.0,173.45 608.5,173.37 609.0,173.29 609.5,173.21 610.0,173.14 610.5,173.06 611.0,172.98 611.5,172.91 612.0,172.83 612.5,172.76 613.0,172.68 613.5,172.60 614.0,172.53 614.5,172.45 615.0,172.38 615.5,172.30 616.0,172.23 616.5,172.15 617.0,172.08 617.5,172.01 618.0,171.93 618.5,171.86 619.0,171.79 619.5,171.71 620.0,171.64 620.5,171.57 621.0,171.49 621.5,171.42 622.0,171.35 622.5,171.28 623.0,171.20 623.5,171.13 624.0,171.06 624.5,170.99 625.0,170.92 625.5,170.85 626.0,170.78 626.5,170.71 627.0,170.64 627.5,170.57 628.0,170.50 628.5,170.43 629.0,170.36 629.5,170.29 630.0,170.22 630.5,170.15 631.0,170.08 631.5,170.01 632.0,169.94 632.5,169.88 633.0,169.81 633.5,169.74 634.0,169.67 634.5,169.61 635.0,169.54 635.5,169.47 636.0,169.40 636.5,169.34 637.0,169.27 637.5,169.21 638.0,169.14 638.5,169.07 639.0,169.01 639.5,168.94 640.0,168.88 640.5,168.81 641.0,168.75 641.5,168.68 642.0,168.62 642.5,168.55 643.0,168.49 643.5,168.43 644.0,168.36 644.5,168.30 645.0,168.24 645.5,168.17 646.0,168.11 646.5,168.05 647.0,167.99 647.5,167.93 648.0,167.86 648.5,167.80 649.0,167.74 649.5,167.68 650.0,167.62 650.5,167.56 651.0,167.50 651.5,167.44 652.0,167.38 652.5,167.32 653.0,167.26 653.5,167.20 654.0,167.14 654.5,167.08 655.0,167.02 655.5,166.96 656.0,166.90 656.5,166.84 657.0,166.79 657.5,166.73 658.0,166.67 658.5,166.61 659.0,166.56 659.5,166.50 660.0,166.44 660.5,166.39 661.0,166.33 661.5,166.27 662.0,166.22 662.5,166.16 663.0,166.11 663.5,166.05 664.0,166.00 664.5,165.94 665.0,165.89 665.5,165.83 666.0,165.78 666.5,165.72 667.0,165.67 667.5,165.62 668.0,165.56 668.5,165.51 669.0,165.46 669.5,165.41 670.0,165.35 670.5,165.30 671.0,165.25 671.5,165.20 672.0,165.15 672.5,165.09 673.0,165.04 673.5,164.99 674.0,164.94 674.5,164.89 675.0,164.84 675.5,164.79 676.0,164.74 676.5,164.69 677.0,164.64 677.5,164.59 678.0,164.54 678.5,164.50 679.0,164.45 679.5,164.40 680.0,164.35 680.5,164.30 681.0,164.25 681.5,164.21 682.0,164.16 682.5,164.11 683.0,164.07 683.5,164.02 684.0,163.97 684.5,163.93 685.0,163.88 685.5,163.84 686.0,163.79 686.5,163.75 687.0,163.70 687.5,163.66 688.0,163.61 688.5,163.57 689.0,163.52 689.5,163.48 690.0,163.44 690.5,163.39 691.0,163.35 691.5,163.31 692.0,163.26 692.5,163.22 693.0,163.18 693.5,163.14 694.0,163.10 694.5,163.05 695.0,163.01 695.5,162.97 696.0,162.93 696.5,162.89 697.0,162.85 697.5,162.81 698.0,162.77 698.5,162.73 699.0,162.69 699.5,162.65 700.0,162.61 700.5,162.57 701.0,162.53 701.5,162.50 702.0,162.46 702.5,162.42 703.0,162.38 703.5,162.34 704.0,162.31 704.5,162.27 705.0,162.23 705.5,162.20 706.0,162.16 706.5,162.12 707.0,162.09 707.5,162.05 708.0,162.02 708.5,161.98 709.0,161.95 709.5,161.91 710.0,161.88 710.5,161.84 711.0,161.81 711.5,161.77 712.0,161.74 712.5,161.71 713.0,161.67 713.5,161.64 714.0,161.61 714.5,161.58 715.0,161.54 715.5,161.51 716.0,161.48 716.5,161.45 717.0,161.42 717.5,161.38 718.0,161.35 718.5,161.32 719.0,161.29 719.5,161.26 720.0,161.23 720.5,161.20 721.0,161.17 721.5,161.14 722.0,161.11 722.5,161.08 723.0,161.06 723.5,161.03 724.0,161.00 724.5,160.97 725.0,160.94 725.5,160.92 726.0,160.89 726.5,160.86 727.0,160.83 727.5,160.81 728.0,160.78 728.5,160.75 729.0,160.73 729.5,160.70 730.0,160.68 730.5,160.65 731.0,160.63 731.5,160.60 732.0,160.58 732.5,160.55 733.0,160.53 733.5,160.50 734.0,160.48 734.5,160.46 735.0,160.43 735.5,160.41 736.0,160.39 736.5,160.37 737.0,160.34 737.5,160.32 738.0,160.30 738.5,160.28 739.0,160.26 739.5,160.23 740.0,160.21 740.5,160.19 741.0,160.17 741.5,160.15 742.0,160.13 742.5,160.11 743.0,160.09 743.5,160.07 744.0,160.05 744.5,160.03 745.0,160.01 745.5,160.00 746.0,159.98 746.5,159.96 747.0,159.94 747.5,159.92 748.0,159.91 748.5,159.89 749.0,159.87 749.5,159.86 750.0,159.84 750.5,159.82 751.0,159.81 751.5,159.79 752.0,159.77 752.5,159.76 753.0,159.74 753.5,159.73 754.0,159.71 754.5,159.70 755.0,159.68 755.5,159.67 756.0,159.66 756.5,159.64 757.0,159.63 757.5,159.62 758.0,159.60 758.5,159.59 759.0,159.58 759.5,159.57 760.0,159.55 760.5,159.54 761.0,159.53 761.5,159.52 762.0,159.51 762.5,159.50 763.0,159.48 763.5,159.47 764.0,159.46 764.5,159.45 765.0,159.44 765.5,159.43 766.0,159.42 766.5,159.41 767.0,159.41 767.5,159.40 768.0,159.39 768.5,159.38 769.0,159.37 769.5,159.36 770.0,159.36 770.5,159.35 771.0,159.34 771.5,159.33 772.0,159.33 772.5,159.32 773.0,159.31 773.5,159.31 774.0,159.30 774.5,159.30 775.0,159.29 775.5,159.28 776.0,159.28 776.5,159.27 777.0,159.27 777.5,159.26 778.0,159.26 778.5,159.26 779.0,159.25 779.5,159.25 780.0,159.25 780.5,159.24 781.0,159.24 781.5,159.24 782.0,159.23 782.5,159.23 783.0,159.23 783.5,159.23 784.0,159.23 784.5,159.22 785.0,159.22 785.5,159.22 786.0,159.22 786.5,159.22 787.0,159.22 787.5,159.22 788.0,159.22 788.5,159.22 789.0,159.22 789.5,159.22 790.0,159.22 790.5,159.22 791.0,159.22 791.5,159.22 792.0,159.23 792.5,159.23 793.0,159.23 793.5,159.23 794.0,159.23 794.5,159.24 795.0,159.24 795.5,159.24 796.0,159.25 796.5,159.25 797.0,159.25 797.5,159.26 798.0,159.26 798.5,159.27 799.0,159.27 799.5,159.27 800.0,159.28 800.5,159.29 801.0,159.29 801.5,159.30 802.0,159.30 802.5,159.31 803.0,159.31 803.5,159.32 804.0,159.33 804.5,159.33 805.0,159.34 805.5,159.35 806.0,159.36 806.5,159.36 807.0,159.37 807.5,159.38 808.0,159.39 808.5,159.40 809.0,159.40 809.5,159.41 810.0,159.42 810.5,159.43 811.0,159.44 811.5,159.45 812.0,159.46 812.5,159.47 813.0,159.48 813.5,159.49 814.0,159.50 814.5,159.51 815.0,159.52 815.5,159.53 816.0,159.55 816.5,159.56 817.0,159.57 817.5,159.58 818.0,159.59 818.5,159.61 819.0,159.62 819.5,159.63 820.0,159.65 820.5,159.66 821.0,159.67 821.5,159.69 822.0,159.70 822.5,159.71 823.0,159.73 823.5,159.74 824.0,159.76 824.5,159.77 825.0,159.79 825.5,159.80 826.0,159.82 826.5,159.83 827.0,159.85 827.5,159.86 828.0,159.88 828.5,159.90 829.0,159.91 829.5,159.93 830.0,159.95 830.5,159.96 831.0,159.98 831.5,160.00 832.0,160.02 832.5,160.03 833.0,160.05 833.5,160.07 834.0,160.09 834.5,160.11 835.0,160.13 835.5,160.15 836.0,160.17 836.5,160.19"/>
<polyline stroke="#e88a50" points="35.5,621.02 36.0,620.16 36.5,619.31 37.0,618.45 37.5,617.60 38.0,616.74 38.5,615.88 39.0,615.03 39.5,614.17 40.0,613.32 40.5,612.46 41.0,611.60 41.5,610.75 42.0,609.89 42.5,609.04 43.0,608.18 43.5,607.33 44.0,606.47 44.5,605.62 45.0,604.76 45.5,603.91 46.0,603.05 46.5,602.20 47.0,601.34 47.5,600.49 48.0,599.63 48.5,598.78 49.0,597.92 49.5,597.07 50.0,596.21 50.5,595.36 51.0,594.50 51.5,593.65 52.0,592.79 52.5,591.94 53.0,591.09 53.5,590.23 54.0,589.38 54.5,588.52 55.0,587.67 55.5,586.82 56.0,585.96 56.5,585.11 57.0,584.26 57.5,583.40 58.0,582.55 58.5,581.70 59.0,580.84 59.5,579.99 60.0,579.14 60.5,578.28 61.0,577.43 61.5,576.58 62.0,575.73 62.5,574.87 63.0,574.02 63.5,573.17 64.0,572.32 64.5,571.47 65.0,570.61 65.5,569.76 66.0,568.91 66.5,568.06 67.0,567.21 67.5,566.35 68.0,565.50 68.5,564.65 69.0,563.80 69.5,562.95 70.0,562.10 70.5,561.25 71.0,560.40 71.5,559.55 72.0,558.69 72.5,557.84 73.0,556.99 73.5,556.14 74.0,555.29 74.5,554.44 75.0,553.59 75.5,552.74 76.0,551.89 76.5,551.04 77.0,550.19 77.5,549.34 78.0,548.49 78.5,547.65 79.0,546.80 79.5,545.95 80.0,545.10 80.5,544.25 81.0,543.40 81.5,542.55 82.0,541.70 82.5,540.86 83.0,540.01 83.5,539.16 84.0,538.31 84.5,537.46 85.0,536.62 85.5,535.77 86.0,534.92 86.5,534.07 87.0,533.23 87.5,532.38 88.0,531.53 88.5,530.69 89.0,529.84 89.5,528.99 90.0,528.15 90.5,527.30 91.0,526.45 91.5,525.61 92.0,524.76 92.5,523.92 93.0,523.07 93.5,522.23 94.0,521.38 94.5,520.54 95.0,519.69 95.5,518.85 96.0,518.00 96.5,517.16 97.0,516.31 97.5,515.47 98.0,514.63 98.5,513.78 99.0,512.94 99.5,512.09 100.0,511.25 100.5,510.41 101.0,509.56 101.5,508.72 102.0,507.88 102.5,507.04 103.0,506.19 103.5,505.35 104.0,504.51 104.5,503.67 105.0,502.83 105.5,501.98 106.0,501.14 106.5,500.30 107.0,499.46 107.5,498.62 108.0,497.78 108.5,496.94 109.0,496.10 109.5,495.26 110.0,494.42 110.5,493.58 111.0,492.74 111.5,491.90 112.0,491.06 112.5,490.22 113.0,489.38 113.5,488.54 114.0,487.71 114.5,486.87 115.0,486.03 115.5,485.19 116.0,484.36 116.5,483.52 117.0,482.68 117.5,481.84 118.0,481.01 118.5,480.17 119.0,479.33 119.5,478.50 120.0,477.66 120.5,476.83 121.0,475.99 121.5,475.16 122.0,474.32 122.5,473.49 123.0,472.65 123.5,471.82 124.0,470.98 124.5,470.15 125.0,469.32 125.5,468.48 126.0,467.65 126.5,466.82 127.0,465.98 127.5,465.15 128.0,464.32 128.5,463.49 129.0,462.66 129.5,461.82 130.0,460.99 130.5,460.16 131.0,459.33 131.5,458.50 132.0,457.67 132.5,456.84 133.0,456.01 133.5,455.18 134.0,454.35 134.5,453.53 135.0,452.70 135.5,451.87 136.0,451.04 136.5,450.21 137.0,449.39 137.5,448.56 138.0,447.73 138.5,446.91 139.0,446.08 139.5,445.25 140.0,444.43 140.5,443.60 141.0,442.78 141.5,441.95 142.0,441.13 142.5,440.31 143.0,439.48 143.5,438.66 144.0,437.83 144.5,437.01 145.0,436.19 145.5,435.37 146.0,434.55 146.5,433.72 147.0,432.90 147.5,432.08 148.0,431.26 148.5,430.44 149.0,429.62 149.5,428.80 150.0,427.98 150.5,427.17 151.0,426.35 151.5,425.53 152.0,424.71 152.5,423.89 153.0,423.08 153.5,422.26 154.0,421.45 154.5,420.63 155.0,419.81 155.5,419.00 156.0,418.19 156.5,417.37 157.0,416.56 157.5,415.74 158.0,414.93 158.5,414.12 159.0,413.31 159.5,412.50 160.0,411.68 160.5,410.87 161.0,410.06 161.5,409.25 162.0,408.44 162.5,407.63 163.0,406.83 163.5,406.02 164.0,405.21 164.5,404.40 165.0,403.60 165.5,402.79 166.0,401.98 166.5,401.18 167.0,400.37 167.5,399.57 168.0,398.77 168.5,397.96 169.0,397.16 169.5,396.36 170.0,395.56 170.5,394.75 171.0,393.95 171.5,393.15 172.0,392.35 172.5,391.55 173.0,390.76 173.5,389.96 174.0,389.16 174.5,388.36 175.0,387.57 175.5,386.77 176.0,385.97 176.5,385.18 177.0,384.39 177.5,383.59 178.0,382.80 178.5,382.01 179.0,381.21 179.5,380.42 180.0,379.63 180.5,378.84 181.0,378.05 181.5,377.26 182.0,376.48 182.5,375.69 183.0,374.90 183.5,374.12 184.0,373.33 184.5,372.55 185.0,371.76 185.5,370.98 186.0,370.19 186.5,369.41 187.0,368.63 187.5,367.85 188.0,367.07 188.5,366.29 189.0,365.51 189.5,364.73 190.0,363.96 190.5,363.18 191.0,362.41 191.5,361.63 192.0,360.86 192.5,360.08 193.0,359.31 193.5,358.54 194.0,357.77 194.5,357.00 195.0,356.23 195.5,355.46 196.0,354.69 196.5,353.92 197.0,353.16 197.5,352.39 198.0,351.63 198.5,350.87 199.0,350.10 199.5,349.34 200.0,348.58 200.5,347.82 201.0,347.06 201.5,346.30 202.0,345.55 202.5,344.79 203.0,344.03 203.5,343.28 204.0,342.53 204.5,341.77 205.0,341.02 205.5,340.27 206.0,339.52 206.5,338.77 207.0,338.03 207.5,337.28 208.0,336.54 208.5,335.79 209.0,335.05 209.5,334.31 210.0,333.56 210.5,332.82 211.0,332.09 211.5,331.35 212.0,330.61 212.5,329.87 213.0,329.14 213.5,328.41 214.0,327.67 214.5,326.94 215.0,326.21 215.5,325.49 216.0,324.76 216.5,324.03 217.0,323.31 217.5,322.58 218.0,321.86 218.5,321.14 219.0,320.42 219.5,319.70 220.0,318.98 220.5,318.27 221.0,317.55 221.5,316.84 222.0,316.13 222.5,315.41 223.0,314.71 223.5,314.00 224.0,313.29 224.5,312.59 225.0,311.88 225.5,311.18 226.0,310.48 226.5,309.78 227.0,309.08 227.5,308.38 228.0,307.69 228.5,306.99 229.0,306.30 229.5,305.61 230.0,304.92 230.5,304.23 231.0,303.55 231.5,302.86 232.0,302.18 232.5,301.50 233.0,300.82 233.5,300.14 234.0,299.46 234.5,298.79 235.0,298.12 235.5,297.44 236.0,296.78 236.5,296.11 237.0,295.44 237.5,294.78 238.0,294.11 238.5,293.45 239.0,292.79 239.5,292.13 240.0,291.48 240.5,290.82 241.0,290.17 241.5,289.52 242.0,288.87 242.5,288.23 243.0,287.58 243.5,286.94 244.0,286.30 244.5,285.66 245.0,285.02 245.5,284.39 246.0,283.75 246.5,283.12 247.0,282.49 247.5,281.87 248.0,281.24 248.5,280.62 249.0,280.00 249.5,279.38 250.0,278.76 250.5,278.14 251.0,277.53 251.5,276.92 252.0,276.31 252.5,275.71 253.0,275.10 253.5,274.50 254.0,273.90 254.5,273.30 255.0,272.71 255.5,272.11 256.0,271.52 256.5,270.93 257.0,270.35 257.5,269.76 258.0,269.18 258.5,268.60 259.0,268.02 259.5,267.45 260.0,266.87 260.5,266.30 261.0,265.73 261.5,265.17 262.0,264.60 262.5,264.04 263.0,263.48 263.5,262.93 264.0,262.37 264.5,261.82 265.0,261.27 265.5,260.73 266.0,260.18 266.5,259.64 267.0,259.10 267.5,258.57 268.0,258.03 268.5,257.50 269.0,256.97 269.5,256.45 270.0,255.92 270.5,255.40 271.0,254.88 271.5,254.36 272.0,253.85 272.5,253.34 273.0,252.83 273.5,252.33 274.0,251.82 274.5,251.32 275.0,250.82 275.5,250.33 276.0,249.84 276.5,249.35 277.0,248.86 277.5,248.37 278.0,247.89 278.5,247.41 279.0,246.94 279.5,246.46 280.0,245.99 280.5,245.52 281.0,245.06 281.5,244.60 282.0,244.14 282.5,243.68 283.0,243.22 283.5,242.77 284.0,242.32 284.5,241.88 285.0,241.43 285.5,240.99 286.0,240.55 286.5,240.12 287.0,239.69 287.5,239.26 288.0,238.83 288.5,238.41 289.0,237.98 289.5,237.57 290.0,237.15 290.5,236.74 291.0,236.33 291.5,235.92 292.0,235.51 292.5,235.11 293.0,234.71 293.5,234.32 294.0,233.92 294.5,233.53 295.0,233.15 295.5,232.76 296.0,232.38 296.5,232.00 297.0,231.62 297.5,231.25 298.0,230.88 298.5,230.51 299.0,230.14 299.5,229.78 300.0,229.42 300.5,229.06 301.0,228.71 301.5,228.36 302.0,228.01 302.5,227.66 303.0,227.32 303.5,226.98 304.0,226.64 304.5,226.31 305.0,225.97 305.5,225.64 306.0,225.32 306.5,224.99 307.0,224.67 307.5,224.35 308.0,224.03 308.5,223.72 309.0,223.41 309.5,223.10 310.0,222.80 310.5,222.49 311.0,222.19 311.5,221.90 312.0,221.60 312.5,221.31 313.0,221.02 313.5,220.73 314.0,220.45 314.5,220.16 315.0,219.89 315.5,219.61 316.0,219.33 316.5,219.06 317.0,218.79 317.5,218.53 318.0,218.26 318.5,218.00 319.0,217.74 319.5,217.48 320.0,217.23 320.5,216.98 321.0,216.73 321.5,216.48 322.0,216.24 322.5,215.99 323.0,215.75 323.5,215.52 324.0,215.28 324.5,215.05 325.0,214.82 325.5,214.59 326.0,214.37 326.5,214.14 327.0,213.92 327.5,213.70 328.0,213.49 328.5,213.27 329.0,213.06 329.5,212.85 330.0,212.64 330.5,212.44 331.0,212.23 331.5,212.03 332.0,211.83 332.5,211.64 333.0,211.44 333.5,211.25 334.0,211.06 334.5,210.87 335.0,210.68 335.5,210.50 336.0,210.32 336.5,210.14 337.0,209.96 337.5,209.78 338.0,209.61 338.5,209.44 339.0,209.27 339.5,209.10 340.0,208.93 340.5,208.77 341.0,208.60 341.5,208.44 342.0,208.29 342.5,208.13 343.0,207.97 343.5,207.82 344.0,207.67 344.5,207.52 345.0,207.37 345.5,207.23 346.0,207.08 346.5,206.94 347.0,206.80 347.5,206.66 348.0,206.52 348.5,206.38 349.0,206.25 349.5,206.12 350.0,205.99 350.5,205.86 351.0,205.73 351.5,205.60 352.0,205.48 352.5,205.36 353.0,205.24 353.5,205.12 354.0,205.00 354.5,204.88 355.0,204.77 355.5,204.65 356.0,204.54 356.5,204.43 357.0,204.32 357.5,204.21 358.0,204.11 358.5,204.00 359.0,203.90 359.5,203.79 360.0,203.69 360.5,203.59 361.0,203.50 361.5,203.40 362.0,203.30 362.5,203.21 363.0,203.12 363.5,203.02 364.0,202.93 364.5,202.84 365.0,202.76 365.5,202.67 366.0,202.58 366.5,202.50 367.0,202.42 367.5,202.33 368.0,202.25 368.5,202.17 369.0,202.10 369.5,202.02 370.0,201.94 370.5,201.87 371.0,201.79 371.5,201.72 372.0,201.65 372.5,201.58 373.0,201.51 373.5,201.44 374.0,201.37 374.5,201.30 375.0,201.24 375.5,201.17 376.0,201.11 376.5,201.05 377.0,200.98 377.5,200.92 378.0,200.86 378.5,200.80 379.0,200.75 379.5,200.69 380.0,200.63 380.5,200.58 381.0,200.52 381.5,200.47 382.0,200.42 382.5,200.36 383.0,200.31 383.5,200.26 384.0,200.21 384.5,200.16 385.0,200.12 385.5,200.07 386.0,200.02 386.5,199.98 387.0,199.93 387.5,199.89 388.0,199.84 388.5,199.80 389.0,199.76 389.5,199.72 390.0,199.68 390.5,199.64 391.0,199.60 391.5,199.56 392.0,199.52 392.5,199.49 393.0,199.45 393.5,199.41 394.0,199.38 394.5,199.35 395.0,199.31 395.5,199.28 396.0,199.25 396.5,199.21 397.0,199.18 397.5,199.15 398.0,199.12 398.5,199.09 399.0,199.06 399.5,199.04 400.0,199.01 400.5,198.98 401.0,198.95 401.5,198.93 402.0,198.90 402.5,198.88 403.0,198.85 403.5,198.83 404.0,198.80 404.5,198.78 405.0,198.76 405.5,198.74 406.0,198.71 406.5,198.69 407.0,198.67 407.5,198.65 408.0,198.63 408.5,198.61 409.0,198.60 409.5,198.58 410.0,198.56 410.5,198.54 411.0,198.52 411.5,198.51 412.0,198.49 412.5,198.48 413.0,198.46 413.5,198.44 414.0,198.43 414.5,198.42 415.0,198.40 415.5,198.39 416.0,198.38 416.5,198.36 417.0,198.35 417.5,198.34 418.0,198.33 418.5,198.32 419.0,198.30 419.5,198.29 420.0,198.28 420.5,198.27 421.0,198.26 421.5,198.25 422.0,198.25 422.5,198.24 423.0,198.23 423.5,198.22 424.0,198.21 424.5,198.21 425.0,198.20 425.5,198.19 426.0,198.18 426.5,198.18 427.0,198.17 427.5,198.17 428.0,198.16 428.5,198.16 429.0,198.15 429.5,198.15 430.0,198.14 430.5,198.14 431.0,198.13 431.5,198.13 432.0,198.13 432.5,198.12 433.0,198.12 433.5,198.12 434.0,198.12 434.5,198.11 435.0,198.11 435.5,198.11 436.0,198.11 436.5,198.11 437.0,198.11 437.5,198.11 438.0,198.10 438.5,198.10 439.0,198.10 439.5,198.10 440.0,198.10 440.5,198.10 441.0,198.10 441.5,198.11 442.0,198.11 442.5,198.11 443.0,198.11 443.5,198.11 444.0,198.11 444.5,198.11 445.0,198.12 445.5,198.12 446.0,198.12 446.5,198.12 447.0,198.12 447.5,198.13 448.0,198.13 448.5,198.13 449.0,198.14 449.5,198.14 450.0,198.14 450.5,198.15 451.0,198.15 451.5,198.16 452.0,198.16 452.5,198.16 453.0,198.17 453.5,198.17 454.0,198.18 454.5,198.18 455.0,198.19 455.5,198.19 456.0,198.20 456.5,198.20 457.0,198.21 457.5,198.21 458.0,198.22 458.5,198.23 459.0,198.23 459.5,198.24 460.0,198.24 460.5,198.25 461.0,198.26 461.5,198.26 462.0,198.27 462.5,198.28 463.0,198.28 463.5,198.29 464.0,198.30 464.5,198.31 465.0,198.31 465.5,198.32 466.0,198.33 466.5,198.33 467.0,198.34 467.5,198.35 468.0,198.36 468.5,198.37 469.0,198.37 469.5,198.38 470.0,198.39 470.5,198.40 471.0,198.41 471.5,198.42 472.0,198.42 472.5,198.43 473.0,198.44 473.5,198.45 474.0,198.46 474.5,198.47 475.0,198.48 475.5,198.49 476.0,198.50 476.5,198.50 477.0,198.51 477.5,198.52 478.0,198.53 478.5,198.54 479.0,198.55 479.5,198.56 480.0,198.57 480.5,198.58 481.0,198.59 481.5,198.60 482.0,198.61 482.5,198.62 483.0,198.63 483.5,198.64 484.0,198.65 484.5,198.66 485.0,198.67 485.5,198.68 486.0,198.69 486.5,198.70 487.0,198.71 487.5,198.72 488.0,198.74 488.5,198.75 489.0,198.76 489.5,198.77 490.0,198.78 490.5,198.79 491.0,198.80 491.5,198.81 492.0,198.82 492.5,198.83 493.0,198.84 493.5,198.86 494.0,198.87 494.5,198.88 495.0,198.89 495.5,198.90 496.0,198.91 496.5,198.92 497.0,198.94 497.5,198.95 498.0,198.96 498.5,198.97 499.0,198.98 499.5,198.99 500.0,199.01 500.5,199.02 501.0,199.03 501.5,199.04 502.0,199.05 502.5,199.07 503.0,199.08 503.5,199.09 504.0,199.10 504.5,199.11 505.0,199.13 505.5,199.14 506.0,199.15 506.5,199.16 507.0,199.18 507.5,199.19 508.0,199.20 508.5,199.21 509.0,199.23 509.5,199.24 510.0,199.25 510.5,199.26 511.0,199.28 511.5,199.29 512.0,199.30 512.5,199.31 513.0,199.33 513.5,199.34 514.0,199.35 514.5,199.36 515.0,199.38 515.5,199.39 516.0,199.40 516.5,199.42 517.0,199.43 517.5,199.44 518.0,199.46 518.5,199.47 519.0,199.48 519.5,199.49 520.0,199.51 520.5,199.52 521.0,199.53 521.5,199.55 522.0,199.56 522.5,199.57 523.0,199.59 523.5,199.60 524.0,199.61 524.5,199.63 525.0,199.64 525.5,199.65 526.0,199.67 526.5,199.68 527.0,199.70 527.5,199.71 528.0,199.72 528.5,199.74 529.0,199.75 529.5,199.76 530.0,199.78 530.5,199.79 531.0,199.80 531.5,199.82 532.0,199.83 532.5,199.85 533.0,199.86 533.5,199.87 534.0,199.89 534.5,199.90 535.0,199.92 535.5,199.93 536.0,199.94 536.5,199.96 537.0,199.97 537.5,199.99 538.0,200.00 538.5,200.01 539.0,200.03 539.5,200.04 540.0,200.06 540.5,200.07 541.0,200.08 541.5,200.10 542.0,200.11 542.5,200.13 543.0,200.14 543.5,200.16 544.0,200.17 544.5,200.18 545.0,200.20 545.5,200.21 546.0,200.23 546.5,200.24 547.0,200.26 547.5,200.27 548.0,200.29 548.5,200.30 549.0,200.32 549.5,200.33 550.0,200.34 550.5,200.36 551.0,200.37 551.5,200.39 552.0,200.40 552.5,200.42 553.0,200.43 553.5,200.45 554.0,200.46 554.5,200.48 555.0,200.49 555.5,200.51 556.0,200.52 556.5,200.54 557.0,200.55 557.5,200.57 558.0,200.58 558.5,200.60 559.0,200.61 559.5,200.63 560.0,200.64 560.5,200.66 561.0,200.67 561.5,200.69 562.0,200.70 562.5,200.72 563.0,200.73 563.5,200.75 564.0,200.76 564.5,200.78 565.0,200.79 565.5,200.81 566.0,200.83 566.5,200.84 567.0,200.86 567.5,200.87 568.0,200.89 568.5,200.90 569.0,200.92 569.5,200.93 570.0,200.95 570.5,200.97 571.0,200.98 571.5,201.00 572.0,201.01 572.5,201.03 573.0,201.04 573.5,201.06 574.0,201.08 574.5,201.09 575.0,201.11 575.5,201.12 576.0,201.14 576.5,201.16 577.0,201.17 577.5,201.19 578.0,201.20 578.5,201.22 579.0,201.24 579.5,201.25 580.0,201.27 580.5,201.28 581.0,201.30 581.5,201.32 582.0,201.33 582.5,201.35 583.0,201.37 583.5,201.38 584.0,201.40 584.5,201.41 585.0,201.43 585.5,201.45 586.0,201.46 586.5,201.48 587.0,201.50 587.5,201.51 588.0,201.53 588.5,201.55 589.0,201.56 589.5,201.58 590.0,201.60 590.5,201.61 591.0,201.63 591.5,201.65 592.0,201.66 592.5,201.68 593.0,201.70 593.5,201.71 594.0,201.73 594.5,201.75 595.0,201.77 595.5,201.78 596.0,201.80 596.5,201.82 597.0,201.83 597.5,201.85 598.0,201.87 598.5,201.89 599.0,201.90 599.5,201.92 600.0,201.94 600.5,201.95 601.0,201.97 601.5,201.99 602.0,202.01 602.5,202.02 603.0,202.04 603.5,202.06 604.0,202.08 604.5,202.09 605.0,202.11 605.5,202.13 606.0,202.15 606.5,202.17 607.0,202.18 607.5,202.20 608.0,202.22 608.5,202.24 609.0,202.25 609.5,202.27 610.0,202.29 610.5,202.31 611.0,202.33 611.5,202.34 612.0,202.36 612.5,202.38 613.0,202.40 613.5,202.42 614.0,202.44 614.5,202.45 615.0,202.47 615.5,202.49 616.0,202.51 616.5,202.53 617.0,202.55 617.5,202.56 618.0,202.58 618.5,202.60 619.0,202.62 619.5,202.64 620.0,202.66 620.5,202.68 621.0,202.70 621.5,202.71 622.0,202.73 622.5,202.75 623.0,202.77 623.5,202.79 624.0,202.81 624.5,202.83 625.0,202.85 625.5,202.87 626.0,202.89 626.5,202.90 627.0,202.92 627.5,202.94 628.0,202.96 628.5,202.98 629.0,203.00 629.5,203.02 630.0,203.04 630.5,203.06 631.0,203.08 631.5,203.10 632.0,203.12 632.5,203.14 633.0,203.16 633.5,203.18 634.0,203.20 634.5,203.22 635.0,203.24 635.5,203.26 636.0,203.28 636.5,203.30 637.0,203.32 637.5,203.34 638.0,203.36 638.5,203.38 639.0,203.40 639.5,203.42 640.0,203.44 640.5,203.46 641.0,203.48 641.5,203.50 642.0,203.52 642.5,203.54 643.0,203.56 643.5,203.58 644.0,203.60 644.5,203.62 645.0,203.64 645.5,203.67 646.0,203.69 646.5,203.71 647.0,203.73 647.5,203.75 648.0,203.77 648.5,203.79 649.0,203.81 649.5,203.83 650.0,203.85 650.5,203.88 651.0,203.90 651.5,203.92 652.0,203.94 652.5,203.96 653.0,203.98 653.5,204.00 654.0,204.03 654.5,204.05 655.0,204.07 655.5,204.09 656.0,204.11 656.5,204.13 657.0,204.16 657.5,204.18 658.0,204.20 658.5,204.22 659.0,204.24 659.5,204.27 660.0,204.29 660.5,204.31 661.0,204.33 661.5,204.36 662.0,204.38 662.5,204.40 663.0,204.42 663.5,204.45 664.0,204.47 664.5,204.49 665.0,204.51 665.5,204.54 666.0,204.56 666.5,204.58 667.0,204.61 667.5,204.63 668.0,204.65 668.5,204.67 669.0,204.70 669.5,204.72 670.0,204.74 670.5,204.77 671.0,204.79 671.5,204.81 672.0,204.84 672.5,204.86 673.0,204.88 673.5,204.91 674.0,204.93 674.5,204.95 675.0,204.98 675.5,205.00 676.0,205.03 676.5,205.05 677.0,205.07 677.5,205.10 678.0,205.12 678.5,205.15 679.0,205.17 679.5,205.19 680.0,205.22 680.5,205.24 681.0,205.27 681.5,205.29 682.0,205.32 682.5,205.34 683.0,205.37 683.5,205.39 684.0,205.42 684.5,205.44 685.0,205.47 685.5,205.49 686.0,205.52 686.5,205.54 687.0,205.57 687.5,205.59 688.0,205.62 688.5,205.64 689.0,205.67 689.5,205.69 690.0,205.72 690.5,205.74 691.0,205.77 691.5,205.79 692.0,205.82 692.5,205.85 693.0,205.87 693.5,205.90 694.0,205.92 694.5,205.95 695.0,205.97 695.5,206.00 696.0,206.03 696.5,206.05 697.0,206.08 697.5,206.11 698.0,206.13 698.5,206.16 699.0,206.19 699.5,206.21 700.0,206.24 700.5,206.26 701.0,206.29 701.5,206.32 702.0,206.35 702.5,206.37 703.0,206.40 703.5,206.43 704.0,206.45 704.5,206.48 705.0,206.51 705.5,206.54 706.0,206.56 706.5,206.59 707.0,206.62 707.5,206.65 708.0,206.67 708.5,206.70 709.0,206.73 709.5,206.76 710.0,206.78 710.5,206.81 711.0,206.84 711.5,206.87 712.0,206.90 712.5,206.92 713.0,206.95 713.5,206.98 714.0,207.01 714.5,207.04 715.0,207.07 715.5,207.10 716.0,207.12 716.5,207.15 717.0,207.18 717.5,207.21 718.0,207.24 718.5,207.27 719.0,207.30 719.5,207.33 720.0,207.36 720.5,207.39 721.0,207.41 721.5,207.44 722.0,207.47 722.5,207.50 723.0,207.53 723.5,207.56 724.0,207.59 724.5,207.62 725.0,207.65 725.5,207.68 726.0,207.71 726.5,207.74 727.0,207.77 727.5,207.80 728.0,207.83 728.5,207.86 729.0,207.89 729.5,207.92 730.0,207.95 730.5,207.98 731.0,208.02 731.5,208.05 732.0,208.08 732.5,208.11 733.0,208.14 733.5,208.17 734.0,208.20 734.5,208.23 735.0,208.26 735.5,208.30 736.0,208.33 736.5,208.36 737.0,208.39 737.5,208.42 738.0,208.45 738.5,208.49 739.0,208.52 739.5,208.55 740.0,208.58 740.5,208.61 741.0,208.65 741.5,208.68 742.0,208.71 742.5,208.74 743.0,208.77 743.5,208.81 744.0,208.84 744.5,208.87 745.0,208.91 745.5,208.94 746.0,208.97 746.5,209.00 747.0,209.04 747.5,209.07 748.0,209.10 748.5,209.14 749.0,209.17 749.5,209.20 750.0,209.24 750.5,209.27 751.0,209.30 751.5,209.34 752.0,209.37 752.5,209.41 753.0,209.44 753.5,209.47 754.0,209.51 754.5,209.54 755.0,209.58 755.5,209.61 756.0,209.64 756.5,209.68 757.0,209.71 757.5,209.75 758.0,209.78 758.5,209.82 759.0,209.85 759.5,209.89 760.0,209.92 760.5,209.96 761.0,209.99 761.5,210.03 762.0,210.06 762.5,210.10 763.0,210.13 763.5,210.17 764.0,210.21 764.5,210.24 765.0,210.28 765.5,210.31 766.0,210.35 766.5,210.39 767.0,210.42 767.5,210.46 768.0,210.49 768.5,210.53 769.0,210.57 769.5,210.60 770.0,210.64 770.5,210.68 771.0,210.71 771.5,210.75 772.0,210.79 772.5,210.82 773.0,210.86 773.5,210.90 774.0,210.94 774.5,210.97 775.0,211.01 775.5,211.05 776.0,211.09 776.5,211.12 777.0,211.16 777.5,211.20 778.0,211.24 778.5,211.27 779.0,211.31 779.5,211.35 780.0,211.39 780.5,211.43 781.0,211.47 781.5,211.50 782.0,211.54 782.5,211.58 783.0,211.62 783.5,211.66 784.0,211.70 784.5,211.74 785.0,211.78 785.5,211.82 786.0,211.85 786.5,211.89 787.0,211.93 787.5,211.97 788.0,212.01 788.5,212.05 789.0,212.09 789.5,212.13 790.0,212.17 790.5,212.21 791.0,212.25 791.5,212.29 792.0,212.33 792.5,212.37 793.0,212.41 793.5,212.45 794.0,212.49 794.5,212.54 795.0,212.58 795.5,212.62 796.0,212.66 796.5,212.70 797.0,212.74 797.5,212.78 798.0,212.82 798.5,212.86 799.0,212.91 799.5,212.95 800.0,212.99 800.5,213.03 801.0,213.07 801.5,213.11 802.0,213.16 802.5,213.20 803.0,213.24 803.5,213.28 804.0,213.33 804.5,213.37 805.0,213.41 805.5,213.45 806.0,213.50 806.5,213.54 807.0,213.58 807.5,213.63 808.0,213.67 808.5,213.71 809.0,213.75 809.5,213.80 810.0,213.84 810.5,213.89 811.0,213.93 811.5,213.97 812.0,214.02 812.5,214.06 813.0,214.10 813.5,214.15 814.0,214.19 814.5,214.24 815.0,214.28 815.5,214.33 816.0,214.37 816.5,214.42 817.0,214.46 817.5,214.50 818.0,214.55 818.5,214.59 819.0,214.64 819.5,214.69 820.0,214.73 820.5,214.78 821.0,214.82 821.5,214.87 822.0,214.91 822.5,214.96 823.0,215.00 823.5,215.05 824.0,215.10 824.5,215.14 825.0,215.19 825.5,215.24 826.0,215.28 826.5,215.33 827.0,215.37 827.5,215.42 828.0,215.47 828.5,215.52 829.0,215.56 829.5,215.61 830.0,215.66 830.5,215.70 831.0,215.75 831.5,215.80 832.0,215.85 832.5,215.89 833.0,215.94 833.5,215.99 834.0,216.04 834.5,216.09 835.0,216.13 835.5,216.18 836.0,216.23 836.5,216.28"/>
</g>
</svg>
<div style="left:840px;top:2px;width:1px;height:756px;background:#5866c4"></div>
<div class="win" style="left:841px;top:2px;width:493px;height:218px">
<div class="title" style="left:0;top:0;width:493px;height:34px"></div>
</div>
<svg style="position:absolute;left:850px;top:10px" width="11" height="16" viewBox="0 0 11 16" shape-rendering="crispEdges"><rect x="0" y="0" width="11" height="16" fill="#000"/><rect x="1" y="1" width="1" height="1" fill="#fff"/><rect x="2" y="1" width="1" height="1" fill="#8a8a8a"/><rect x="3" y="1" width="1" height="1" fill="#fff"/><rect x="4" y="1" width="1" height="1" fill="#8a8a8a"/><rect x="5" y="1" width="1" height="1" fill="#fff"/><rect x="6" y="1" width="1" height="1" fill="#8a8a8a"/><rect x="7" y="1" width="1" height="1" fill="#fff"/><rect x="8" y="1" width="1" height="1" fill="#8a8a8a"/><rect x="9" y="1" width="1" height="1" fill="#fff"/><rect x="1" y="2" width="1" height="1" fill="#8a8a8a"/><rect x="2" y="2" width="1" height="1" fill="#fff"/><rect x="3" y="2" width="1" height="1" fill="#8a8a8a"/><rect x="4" y="2" width="1" height="1" fill="#fff"/><rect x="5" y="2" width="1" height="1" fill="#8a8a8a"/><rect x="6" y="2" width="1" height="1" fill="#fff"/><rect x="7" y="2" width="1" height="1" fill="#8a8a8a"/><rect x="8" y="2" width="1" height="1" fill="#fff"/><rect x="9" y="2" width="1" height="1" fill="#8a8a8a"/><rect x="1" y="3" width="1" height="1" fill="#fff"/><rect x="2" y="3" width="1" height="1" fill="#8a8a8a"/><rect x="3" y="3" width="1" height="1" fill="#fff"/><rect x="4" y="3" width="1" height="1" fill="#8a8a8a"/><rect x="5" y="3" width="1" height="1" fill="#fff"/><rect x="6" y="3" width="1" height="1" fill="#8a8a8a"/><rect x="1" y="4" width="1" height="1" fill="#8a8a8a"/><rect x="2" y="4" width="1" height="1" fill="#fff"/><rect x="3" y="4" width="1" height="1" fill="#8a8a8a"/><rect x="4" y="4" width="1" height="1" fill="#fff"/><rect x="5" y="4" width="1" height="1" fill="#8a8a8a"/><rect x="6" y="4" width="1" height="1" fill="#fff"/><rect x="1" y="5" width="1" height="1" fill="#fff"/><rect x="2" y="5" width="1" height="1" fill="#8a8a8a"/><rect x="3" y="5" width="1" height="1" fill="#fff"/><rect x="4" y="5" width="1" height="1" fill="#8a8a8a"/><rect x="5" y="5" width="1" height="1" fill="#fff"/><rect x="6" y="5" width="1" height="1" fill="#8a8a8a"/><rect x="1" y="6" width="1" height="1" fill="#8a8a8a"/><rect x="2" y="6" width="1" height="1" fill="#fff"/><rect x="3" y="6" width="1" height="1" fill="#8a8a8a"/><rect x="4" y="6" width="1" height="1" fill="#fff"/><rect x="5" y="6" width="1" height="1" fill="#8a8a8a"/><rect x="6" y="6" width="1" height="1" fill="#fff"/><rect x="1" y="7" width="1" height="1" fill="#fff"/><rect x="2" y="7" width="1" height="1" fill="#8a8a8a"/><rect x="3" y="7" width="1" height="1" fill="#fff"/><rect x="4" y="7" width="1" height="1" fill="#8a8a8a"/><rect x="5" y="7" width="1" height="1" fill="#fff"/><rect x="6" y="7" width="1" height="1" fill="#8a8a8a"/><rect x="1" y="8" width="1" height="1" fill="#8a8a8a"/><rect x="2" y="8" width="1" height="1" fill="#fff"/><rect x="3" y="8" width="1" height="1" fill="#8a8a8a"/><rect x="4" y="8" width="1" height="1" fill="#fff"/><rect x="5" y="8" width="1" height="1" fill="#8a8a8a"/><rect x="6" y="8" width="1" height="1" fill="#fff"/><rect x="1" y="9" width="1" height="1" fill="#fff"/><rect x="2" y="9" width="1" height="1" fill="#8a8a8a"/><rect x="3" y="9" width="1" height="1" fill="#fff"/><rect x="4" y="9" width="1" height="1" fill="#8a8a8a"/><rect x="5" y="9" width="1" height="1" fill="#fff"/><rect x="6" y="9" width="1" height="1" fill="#8a8a8a"/><rect x="1" y="10" width="1" height="1" fill="#8a8a8a"/><rect x="2" y="10" width="1" height="1" fill="#fff"/><rect x="3" y="10" width="1" height="1" fill="#8a8a8a"/><rect x="4" y="10" width="1" height="1" fill="#fff"/><rect x="5" y="10" width="1" height="1" fill="#8a8a8a"/><rect x="6" y="10" width="1" height="1" fill="#fff"/><rect x="1" y="11" width="1" height="1" fill="#fff"/><rect x="2" y="11" width="1" height="1" fill="#8a8a8a"/><rect x="3" y="11" width="1" height="1" fill="#fff"/><rect x="4" y="11" width="1" height="1" fill="#8a8a8a"/><rect x="5" y="11" width="1" height="1" fill="#fff"/><rect x="6" y="11" width="1" height="1" fill="#8a8a8a"/><rect x="1" y="12" width="1" height="1" fill="#8a8a8a"/><rect x="2" y="12" width="1" height="1" fill="#fff"/><rect x="3" y="12" width="1" height="1" fill="#8a8a8a"/><rect x="4" y="12" width="1" height="1" fill="#fff"/><rect x="5" y="12" width="1" height="1" fill="#8a8a8a"/><rect x="6" y="12" width="1" height="1" fill="#fff"/><rect x="1" y="13" width="1" height="1" fill="#fff"/><rect x="2" y="13" width="1" height="1" fill="#8a8a8a"/><rect x="3" y="13" width="1" height="1" fill="#fff"/><rect x="4" y="13" width="1" height="1" fill="#8a8a8a"/><rect x="5" y="13" width="1" height="1" fill="#fff"/><rect x="6" y="13" width="1" height="1" fill="#8a8a8a"/><rect x="1" y="14" width="1" height="1" fill="#8a8a8a"/><rect x="2" y="14" width="1" height="1" fill="#fff"/><rect x="3" y="14" width="1" height="1" fill="#8a8a8a"/><rect x="4" y="14" width="1" height="1" fill="#fff"/><rect x="5" y="14" width="1" height="1" fill="#8a8a8a"/><rect x="6" y="14" width="1" height="1" fill="#fff"/><rect x="6" y="10" width="4" height="1" fill="#fff"/><rect x="6" y="13" width="4" height="1" fill="#fff"/></svg>
<div class="ttext" style="left:870px;top:12px">[1]Vented : Alpine SWR-1542D Type-R</div>
<div class="btn bmin" style="left:1243px;top:6px"><div class="minglyph"></div></div>
<div class="btn bmax" style="left:1273px;top:6px"><div class="maxglyph"></div></div>
<div class="btn bclose" style="left:1302px;top:6px"><svg width="26" height="26" viewBox="0 0 26 26"><path d="M4.5 4.5L21.5 21.5M21.5 4.5L4.5 21.5" stroke="#fff" stroke-width="3.5" stroke-linecap="butt"/></svg></div>
<div class="client" style="left:844px;top:36px;width:485px;height:184px"></div>
<div style="left:844px;top:59px;width:485px;height:1px;background:#fff"></div>
<div class="tab" style="left:846px;top:38px;width:52px;height:21px;border-right:1px solid #fff;background:#ebe6da"></div><div class="t" style="left:851px;top:41px;">Driver</div><div class="tab sel" style="left:898px;top:37px;width:58px;height:23px;border-left:1px solid #fff"></div><div class="t" style="left:906px;top:39px;">Box</div><div class="tab" style="left:956px;top:38px;width:52px;height:21px;border-left:none"></div><div class="t" style="left:960px;top:41px;">Vents</div><div class="tab" style="left:1007px;top:38px;width:55px;height:21px;border-left:none"></div><div class="t" style="left:1013px;top:41px;">Plot</div><div class="tab" style="left:1061px;top:38px;width:55px;height:21px;border-left:none"></div><div class="t" style="left:1067px;top:41px;">Signal</div><div class="tab" style="left:1115px;top:38px;width:67px;height:21px;border-left:none"></div><div class="t" style="left:1121px;top:41px;">EQ/Filter</div><div class="tab" style="left:1181px;top:38px;width:55px;height:21px;border-left:none"></div><div class="t" style="left:1187px;top:41px;">Project</div>
<div class="sunk" style="left:854px;top:68px;width:372px;height:20px"></div>
<div class="t" style="left:854px;top:70px;">Vented</div>
<div class="boxshape" style="left:1232px;top:70px;width:85px;height:19px"></div>
<div style="left:1230px;top:68px;width:90px;height:23px;border:1px solid #d8d4c4;border-right-color:#fff;border-bottom-color:#fff"></div>
<div class="t" style="left:1242px;top:71px;">Box shape</div>
<div class="btn3" style="left:854px;top:94px;width:131px;height:19px"></div>
<div class="t" style="left:876px;top:95px;">Rear chamber</div>
<div class="btn3" style="left:990px;top:94px;width:124px;height:19px"></div>
<div class="t" style="left:1009px;top:95px;">Front chamber</div>
<div class="group" style="left:854px;top:118px;width:131px;height:105px"></div>
<div class="t" style="left:859px;top:124px;color:#1c1ca0">Volume:</div>
<div class="edit" style="left:860px;top:143px;width:81px;height:22px"></div>
<div class="t" style="left:863px;top:146px;letter-spacing:-0.8px">152,00</div>
<div class="t" style="left:948px;top:152px;">l</div>
<div class="t" style="left:859px;top:168px;color:#1c1ca0">Tuning freq.:</div>
<div class="edit" style="left:860px;top:187px;width:81px;height:21px"></div>
<div class="t" style="left:863px;top:189px;letter-spacing:-0.8px">0,02500</div>
<div class="t" style="left:948px;top:196px;">kHz</div>
<svg style="position:absolute;left:1119px;top:98px" width="88" height="118" viewBox="0 0 88 118" shape-rendering="crispEdges">
<rect x="0" y="0" width="87" height="118" fill="#000"/><rect x="2" y="2" width="83" height="114" fill="#fff"/>
<rect x="62" y="26" width="9" height="39" rx="3" fill="#000" shape-rendering="auto"/>
<path d="M70 34 L81 20 Q83 19 86 19 L86 72 Q83 72 81 71 L70 57 Z" fill="#000" shape-rendering="auto"/>
<rect x="79" y="30" width="2" height="2" fill="#ccc"/><rect x="79" y="44" width="2" height="2" fill="#ccc"/><rect x="79" y="58" width="2" height="2" fill="#ccc"/>
<rect x="41" y="86" width="45" height="2" fill="#000"/><rect x="41" y="105" width="45" height="2" fill="#000"/>
</svg>
<div style="left:841px;top:220px;width:493px;height:1px;background:#e2ebfc"></div><div style="left:841px;top:221px;width:493px;height:1px;background:#6878b0"></div><div class="win" style="left:841px;top:222px;width:493px;height:218px">
<div class="title" style="left:0;top:0;width:493px;height:34px"></div>
</div>
<svg style="position:absolute;left:850px;top:230px" width="11" height="16" viewBox="0 0 11 16" shape-rendering="crispEdges"><rect x="0" y="0" width="11" height="16" fill="#000"/><rect x="1" y="1" width="1" height="1" fill="#fff"/><rect x="2" y="1" width="1" height="1" fill="#8a8a8a"/><rect x="3" y="1" width="1" height="1" fill="#fff"/><rect x="4" y="1" width="1" height="1" fill="#8a8a8a"/><rect x="5" y="1" width="1" height="1" fill="#fff"/><rect x="6" y="1" width="1" height="1" fill="#8a8a8a"/><rect x="7" y="1" width="1" height="1" fill="#fff"/><rect x="8" y="1" width="1" height="1" fill="#8a8a8a"/><rect x="9" y="1" width="1" height="1" fill="#fff"/><rect x="1" y="2" width="1" height="1" fill="#8a8a8a"/><rect x="2" y="2" width="1" height="1" fill="#fff"/><rect x="3" y="2" width="1" height="1" fill="#8a8a8a"/><rect x="4" y="2" width="1" height="1" fill="#fff"/><rect x="5" y="2" width="1" height="1" fill="#8a8a8a"/><rect x="6" y="2" width="1" height="1" fill="#fff"/><rect x="7" y="2" width="1" height="1" fill="#8a8a8a"/><rect x="8" y="2" width="1" height="1" fill="#fff"/><rect x="9" y="2" width="1" height="1" fill="#8a8a8a"/><rect x="1" y="3" width="1" height="1" fill="#fff"/><rect x="2" y="3" width="1" height="1" fill="#8a8a8a"/><rect x="3" y="3" width="1" height="1" fill="#fff"/><rect x="4" y="3" width="1" height="1" fill="#8a8a8a"/><rect x="5" y="3" width="1" height="1" fill="#fff"/><rect x="6" y="3" width="1" height="1" fill="#8a8a8a"/><rect x="1" y="4" width="1" height="1" fill="#8a8a8a"/><rect x="2" y="4" width="1" height="1" fill="#fff"/><rect x="3" y="4" width="1" height="1" fill="#8a8a8a"/><rect x="4" y="4" width="1" height="1" fill="#fff"/><rect x="5" y="4" width="1" height="1" fill="#8a8a8a"/><rect x="6" y="4" width="1" height="1" fill="#fff"/><rect x="1" y="5" width="1" height="1" fill="#fff"/><rect x="2" y="5" width="1" height="1" fill="#8a8a8a"/><rect x="3" y="5" width="1" height="1" fill="#fff"/><rect x="4" y="5" width="1" height="1" fill="#8a8a8a"/><rect x="5" y="5" width="1" height="1" fill="#fff"/><rect x="6" y="5" width="1" height="1" fill="#8a8a8a"/><rect x="1" y="6" width="1" height="1" fill="#8a8a8a"/><rect x="2" y="6" width="1" height="1" fill="#fff"/><rect x="3" y="6" width="1" height="1" fill="#8a8a8a"/><rect x="4" y="6" width="1" height="1" fill="#fff"/><rect x="5" y="6" width="1" height="1" fill="#8a8a8a"/><rect x="6" y="6" width="1" height="1" fill="#fff"/><rect x="1" y="7" width="1" height="1" fill="#fff"/><rect x="2" y="7" width="1" height="1" fill="#8a8a8a"/><rect x="3" y="7" width="1" height="1" fill="#fff"/><rect x="4" y="7" width="1" height="1" fill="#8a8a8a"/><rect x="5" y="7" width="1" height="1" fill="#fff"/><rect x="6" y="7" width="1" height="1" fill="#8a8a8a"/><rect x="1" y="8" width="1" height="1" fill="#8a8a8a"/><rect x="2" y="8" width="1" height="1" fill="#fff"/><rect x="3" y="8" width="1" height="1" fill="#8a8a8a"/><rect x="4" y="8" width="1" height="1" fill="#fff"/><rect x="5" y="8" width="1" height="1" fill="#8a8a8a"/><rect x="6" y="8" width="1" height="1" fill="#fff"/><rect x="1" y="9" width="1" height="1" fill="#fff"/><rect x="2" y="9" width="1" height="1" fill="#8a8a8a"/><rect x="3" y="9" width="1" height="1" fill="#fff"/><rect x="4" y="9" width="1" height="1" fill="#8a8a8a"/><rect x="5" y="9" width="1" height="1" fill="#fff"/><rect x="6" y="9" width="1" height="1" fill="#8a8a8a"/><rect x="1" y="10" width="1" height="1" fill="#8a8a8a"/><rect x="2" y="10" width="1" height="1" fill="#fff"/><rect x="3" y="10" width="1" height="1" fill="#8a8a8a"/><rect x="4" y="10" width="1" height="1" fill="#fff"/><rect x="5" y="10" width="1" height="1" fill="#8a8a8a"/><rect x="6" y="10" width="1" height="1" fill="#fff"/><rect x="1" y="11" width="1" height="1" fill="#fff"/><rect x="2" y="11" width="1" height="1" fill="#8a8a8a"/><rect x="3" y="11" width="1" height="1" fill="#fff"/><rect x="4" y="11" width="1" height="1" fill="#8a8a8a"/><rect x="5" y="11" width="1" height="1" fill="#fff"/><rect x="6" y="11" width="1" height="1" fill="#8a8a8a"/><rect x="1" y="12" width="1" height="1" fill="#8a8a8a"/><rect x="2" y="12" width="1" height="1" fill="#fff"/><rect x="3" y="12" width="1" height="1" fill="#8a8a8a"/><rect x="4" y="12" width="1" height="1" fill="#fff"/><rect x="5" y="12" width="1" height="1" fill="#8a8a8a"/><rect x="6" y="12" width="1" height="1" fill="#fff"/><rect x="1" y="13" width="1" height="1" fill="#fff"/><rect x="2" y="13" width="1" height="1" fill="#8a8a8a"/><rect x="3" y="13" width="1" height="1" fill="#fff"/><rect x="4" y="13" width="1" height="1" fill="#8a8a8a"/><rect x="5" y="13" width="1" height="1" fill="#fff"/><rect x="6" y="13" width="1" height="1" fill="#8a8a8a"/><rect x="1" y="14" width="1" height="1" fill="#8a8a8a"/><rect x="2" y="14" width="1" height="1" fill="#fff"/><rect x="3" y="14" width="1" height="1" fill="#8a8a8a"/><rect x="4" y="14" width="1" height="1" fill="#fff"/><rect x="5" y="14" width="1" height="1" fill="#8a8a8a"/><rect x="6" y="14" width="1" height="1" fill="#fff"/><rect x="6" y="10" width="4" height="1" fill="#fff"/><rect x="6" y="13" width="4" height="1" fill="#fff"/></svg>
<div class="ttext" style="left:870px;top:232px">[2]Vented : Alpine SWR-1542D Type-R</div>
<div class="btn bmin" style="left:1243px;top:226px"><div class="minglyph"></div></div>
<div class="btn bmax" style="left:1273px;top:226px"><div class="maxglyph"></div></div>
<div class="btn bclose" style="left:1302px;top:226px"><svg width="26" height="26" viewBox="0 0 26 26"><path d="M4.5 4.5L21.5 21.5M21.5 4.5L4.5 21.5" stroke="#fff" stroke-width="3.5" stroke-linecap="butt"/></svg></div>
<div class="client" style="left:844px;top:256px;width:485px;height:184px"></div>
<div style="left:844px;top:279px;width:485px;height:1px;background:#fff"></div>
<div class="tab" style="left:846px;top:258px;width:52px;height:21px;border-right:1px solid #fff;background:#ebe6da"></div><div class="t" style="left:851px;top:261px;">Driver</div><div class="tab sel" style="left:898px;top:257px;width:58px;height:23px;border-left:1px solid #fff"></div><div class="t" style="left:906px;top:259px;">Box</div><div class="tab" style="left:956px;top:258px;width:52px;height:21px;border-left:none"></div><div class="t" style="left:960px;top:261px;">Vents</div><div class="tab" style="left:1007px;top:258px;width:55px;height:21px;border-left:none"></div><div class="t" style="left:1013px;top:261px;">Plot</div><div class="tab" style="left:1061px;top:258px;width:55px;height:21px;border-left:none"></div><div class="t" style="left:1067px;top:261px;">Signal</div><div class="tab" style="left:1115px;top:258px;width:67px;height:21px;border-left:none"></div><div class="t" style="left:1121px;top:261px;">EQ/Filter</div><div class="tab" style="left:1181px;top:258px;width:55px;height:21px;border-left:none"></div><div class="t" style="left:1187px;top:261px;">Project</div>
<div class="sunk" style="left:854px;top:288px;width:372px;height:20px"></div>
<div class="t" style="left:854px;top:290px;">Vented</div>
<div class="boxshape" style="left:1232px;top:290px;width:85px;height:19px"></div>
<div style="left:1230px;top:288px;width:90px;height:23px;border:1px solid #d8d4c4;border-right-color:#fff;border-bottom-color:#fff"></div>
<div class="t" style="left:1242px;top:291px;">Box shape</div>
<div class="btn3" style="left:854px;top:314px;width:131px;height:19px"></div>
<div class="t" style="left:876px;top:315px;">Rear chamber</div>
<div class="btn3" style="left:990px;top:314px;width:124px;height:19px"></div>
<div class="t" style="left:1009px;top:315px;">Front chamber</div>
<div class="group" style="left:854px;top:338px;width:131px;height:105px"></div>
<div class="t" style="left:859px;top:344px;color:#1c1ca0">Volume:</div>
<div class="edit" style="left:860px;top:363px;width:81px;height:22px"></div>
<div class="t" style="left:863px;top:366px;letter-spacing:-0.8px">300,00</div>
<div class="t" style="left:948px;top:372px;">l</div>
<div class="t" style="left:859px;top:388px;color:#1c1ca0">Tuning freq.:</div>
<div class="edit" style="left:860px;top:407px;width:81px;height:21px"></div>
<div class="t" style="left:863px;top:409px;letter-spacing:-0.8px">0,01800</div>
<div class="t" style="left:948px;top:416px;">kHz</div>
<svg style="position:absolute;left:1119px;top:318px" width="88" height="118" viewBox="0 0 88 118" shape-rendering="crispEdges">
<rect x="0" y="0" width="87" height="118" fill="#000"/><rect x="2" y="2" width="83" height="114" fill="#fff"/>
<rect x="62" y="26" width="9" height="39" rx="3" fill="#000" shape-rendering="auto"/>
<path d="M70 34 L81 20 Q83 19 86 19 L86 72 Q83 72 81 71 L70 57 Z" fill="#000" shape-rendering="auto"/>
<rect x="79" y="30" width="2" height="2" fill="#ccc"/><rect x="79" y="44" width="2" height="2" fill="#ccc"/><rect x="79" y="58" width="2" height="2" fill="#ccc"/>
<rect x="41" y="86" width="45" height="2" fill="#000"/><rect x="41" y="105" width="45" height="2" fill="#000"/>
</svg>
<div style="left:841px;top:440px;width:493px;height:1px;background:#e2ebfc"></div><div style="left:841px;top:441px;width:493px;height:1px;background:#6878b0"></div><div class="win" style="left:841px;top:442px;width:493px;height:316px">
<div class="title" style="left:0;top:0;width:493px;height:34px"></div>
</div>
<svg style="position:absolute;left:850px;top:450px" width="11" height="16" viewBox="0 0 11 16" shape-rendering="crispEdges"><rect x="0" y="0" width="11" height="16" fill="#000"/><rect x="1" y="1" width="1" height="1" fill="#fff"/><rect x="2" y="1" width="1" height="1" fill="#8a8a8a"/><rect x="3" y="1" width="1" height="1" fill="#fff"/><rect x="4" y="1" width="1" height="1" fill="#8a8a8a"/><rect x="5" y="1" width="1" height="1" fill="#fff"/><rect x="6" y="1" width="1" height="1" fill="#8a8a8a"/><rect x="7" y="1" width="1" height="1" fill="#fff"/><rect x="8" y="1" width="1" height="1" fill="#8a8a8a"/><rect x="9" y="1" width="1" height="1" fill="#fff"/><rect x="1" y="2" width="1" height="1" fill="#8a8a8a"/><rect x="2" y="2" width="1" height="1" fill="#fff"/><rect x="3" y="2" width="1" height="1" fill="#8a8a8a"/><rect x="4" y="2" width="1" height="1" fill="#fff"/><rect x="5" y="2" width="1" height="1" fill="#8a8a8a"/><rect x="6" y="2" width="1" height="1" fill="#fff"/><rect x="7" y="2" width="1" height="1" fill="#8a8a8a"/><rect x="8" y="2" width="1" height="1" fill="#fff"/><rect x="9" y="2" width="1" height="1" fill="#8a8a8a"/><rect x="1" y="3" width="1" height="1" fill="#fff"/><rect x="2" y="3" width="1" height="1" fill="#8a8a8a"/><rect x="3" y="3" width="1" height="1" fill="#fff"/><rect x="4" y="3" width="1" height="1" fill="#8a8a8a"/><rect x="5" y="3" width="1" height="1" fill="#fff"/><rect x="6" y="3" width="1" height="1" fill="#8a8a8a"/><rect x="1" y="4" width="1" height="1" fill="#8a8a8a"/><rect x="2" y="4" width="1" height="1" fill="#fff"/><rect x="3" y="4" width="1" height="1" fill="#8a8a8a"/><rect x="4" y="4" width="1" height="1" fill="#fff"/><rect x="5" y="4" width="1" height="1" fill="#8a8a8a"/><rect x="6" y="4" width="1" height="1" fill="#fff"/><rect x="1" y="5" width="1" height="1" fill="#fff"/><rect x="2" y="5" width="1" height="1" fill="#8a8a8a"/><rect x="3" y="5" width="1" height="1" fill="#fff"/><rect x="4" y="5" width="1" height="1" fill="#8a8a8a"/><rect x="5" y="5" width="1" height="1" fill="#fff"/><rect x="6" y="5" width="1" height="1" fill="#8a8a8a"/><rect x="1" y="6" width="1" height="1" fill="#8a8a8a"/><rect x="2" y="6" width="1" height="1" fill="#fff"/><rect x="3" y="6" width="1" height="1" fill="#8a8a8a"/><rect x="4" y="6" width="1" height="1" fill="#fff"/><rect x="5" y="6" width="1" height="1" fill="#8a8a8a"/><rect x="6" y="6" width="1" height="1" fill="#fff"/><rect x="1" y="7" width="1" height="1" fill="#fff"/><rect x="2" y="7" width="1" height="1" fill="#8a8a8a"/><rect x="3" y="7" width="1" height="1" fill="#fff"/><rect x="4" y="7" width="1" height="1" fill="#8a8a8a"/><rect x="5" y="7" width="1" height="1" fill="#fff"/><rect x="6" y="7" width="1" height="1" fill="#8a8a8a"/><rect x="1" y="8" width="1" height="1" fill="#8a8a8a"/><rect x="2" y="8" width="1" height="1" fill="#fff"/><rect x="3" y="8" width="1" height="1" fill="#8a8a8a"/><rect x="4" y="8" width="1" height="1" fill="#fff"/><rect x="5" y="8" width="1" height="1" fill="#8a8a8a"/><rect x="6" y="8" width="1" height="1" fill="#fff"/><rect x="1" y="9" width="1" height="1" fill="#fff"/><rect x="2" y="9" width="1" height="1" fill="#8a8a8a"/><rect x="3" y="9" width="1" height="1" fill="#fff"/><rect x="4" y="9" width="1" height="1" fill="#8a8a8a"/><rect x="5" y="9" width="1" height="1" fill="#fff"/><rect x="6" y="9" width="1" height="1" fill="#8a8a8a"/><rect x="1" y="10" width="1" height="1" fill="#8a8a8a"/><rect x="2" y="10" width="1" height="1" fill="#fff"/><rect x="3" y="10" width="1" height="1" fill="#8a8a8a"/><rect x="4" y="10" width="1" height="1" fill="#fff"/><rect x="5" y="10" width="1" height="1" fill="#8a8a8a"/><rect x="6" y="10" width="1" height="1" fill="#fff"/><rect x="1" y="11" width="1" height="1" fill="#fff"/><rect x="2" y="11" width="1" height="1" fill="#8a8a8a"/><rect x="3" y="11" width="1" height="1" fill="#fff"/><rect x="4" y="11" width="1" height="1" fill="#8a8a8a"/><rect x="5" y="11" width="1" height="1" fill="#fff"/><rect x="6" y="11" width="1" height="1" fill="#8a8a8a"/><rect x="1" y="12" width="1" height="1" fill="#8a8a8a"/><rect x="2" y="12" width="1" height="1" fill="#fff"/><rect x="3" y="12" width="1" height="1" fill="#8a8a8a"/><rect x="4" y="12" width="1" height="1" fill="#fff"/><rect x="5" y="12" width="1" height="1" fill="#8a8a8a"/><rect x="6" y="12" width="1" height="1" fill="#fff"/><rect x="1" y="13" width="1" height="1" fill="#fff"/><rect x="2" y="13" width="1" height="1" fill="#8a8a8a"/><rect x="3" y="13" width="1" height="1" fill="#fff"/><rect x="4" y="13" width="1" height="1" fill="#8a8a8a"/><rect x="5" y="13" width="1" height="1" fill="#fff"/><rect x="6" y="13" width="1" height="1" fill="#8a8a8a"/><rect x="1" y="14" width="1" height="1" fill="#8a8a8a"/><rect x="2" y="14" width="1" height="1" fill="#fff"/><rect x="3" y="14" width="1" height="1" fill="#8a8a8a"/><rect x="4" y="14" width="1" height="1" fill="#fff"/><rect x="5" y="14" width="1" height="1" fill="#8a8a8a"/><rect x="6" y="14" width="1" height="1" fill="#fff"/><rect x="6" y="10" width="4" height="1" fill="#fff"/><rect x="6" y="13" width="4" height="1" fill="#fff"/></svg>
<div class="ttext" style="left:870px;top:452px">[3]Vented : Eminence LAB15</div>
<div class="btn bmin" style="left:1243px;top:446px"><div class="minglyph"></div></div>
<div class="btn bmax" style="left:1273px;top:446px"><div class="maxglyph"></div></div>
<div class="btn bclose" style="left:1302px;top:446px"><svg width="26" height="26" viewBox="0 0 26 26"><path d="M4.5 4.5L21.5 21.5M21.5 4.5L4.5 21.5" stroke="#fff" stroke-width="3.5" stroke-linecap="butt"/></svg></div>
<div class="client" style="left:844px;top:476px;width:485px;height:680px"></div>
<div style="left:844px;top:499px;width:485px;height:1px;background:#fff"></div>
<div class="tab" style="left:846px;top:478px;width:52px;height:21px;border-right:1px solid #fff;background:#ebe6da"></div><div class="t" style="left:851px;top:481px;">Driver</div><div class="tab sel" style="left:898px;top:477px;width:58px;height:23px;border-left:1px solid #fff"></div><div class="t" style="left:906px;top:479px;">Box</div><div class="tab" style="left:956px;top:478px;width:52px;height:21px;border-left:none"></div><div class="t" style="left:960px;top:481px;">Vents</div><div class="tab" style="left:1007px;top:478px;width:55px;height:21px;border-left:none"></div><div class="t" style="left:1013px;top:481px;">Plot</div><div class="tab" style="left:1061px;top:478px;width:55px;height:21px;border-left:none"></div><div class="t" style="left:1067px;top:481px;">Signal</div><div class="tab" style="left:1115px;top:478px;width:67px;height:21px;border-left:none"></div><div class="t" style="left:1121px;top:481px;">EQ/Filter</div><div class="tab" style="left:1181px;top:478px;width:55px;height:21px;border-left:none"></div><div class="t" style="left:1187px;top:481px;">Project</div>
<div class="sunk" style="left:854px;top:508px;width:372px;height:20px"></div>
<div class="t" style="left:854px;top:510px;">Vented</div>
<div class="boxshape" style="left:1232px;top:510px;width:85px;height:19px"></div>
<div style="left:1230px;top:508px;width:90px;height:23px;border:1px solid #d8d4c4;border-right-color:#fff;border-bottom-color:#fff"></div>
<div class="t" style="left:1242px;top:511px;">Box shape</div>
<div class="btn3" style="left:854px;top:534px;width:131px;height:19px"></div>
<div class="t" style="left:876px;top:535px;">Rear chamber</div>
<div class="btn3" style="left:990px;top:534px;width:124px;height:19px"></div>
<div class="t" style="left:1009px;top:535px;">Front chamber</div>
<div class="group" style="left:854px;top:558px;width:131px;height:168px"></div>
<div class="t" style="left:859px;top:564px;color:#1c1ca0">Volume:</div>
<div class="edit" style="left:860px;top:583px;width:81px;height:22px"></div>
<div class="t" style="left:863px;top:586px;letter-spacing:-0.8px">300,00</div>
<div class="t" style="left:948px;top:592px;">l</div>
<div class="t" style="left:859px;top:608px;color:#1c1ca0">Tuning freq.:</div>
<div class="edit" style="left:860px;top:627px;width:81px;height:21px"></div>
<div class="t" style="left:863px;top:629px;letter-spacing:-0.8px">0,02000</div>
<div class="t" style="left:948px;top:636px;">kHz</div>
<svg style="position:absolute;left:1119px;top:538px" width="88" height="118" viewBox="0 0 88 118" shape-rendering="crispEdges">
<rect x="0" y="0" width="87" height="118" fill="#000"/><rect x="2" y="2" width="83" height="114" fill="#fff"/>
<rect x="62" y="26" width="9" height="39" rx="3" fill="#000" shape-rendering="auto"/>
<path d="M70 34 L81 20 Q83 19 86 19 L86 72 Q83 72 81 71 L70 57 Z" fill="#000" shape-rendering="auto"/>
<rect x="79" y="30" width="2" height="2" fill="#ccc"/><rect x="79" y="44" width="2" height="2" fill="#ccc"/><rect x="79" y="58" width="2" height="2" fill="#ccc"/>
<rect x="41" y="86" width="45" height="2" fill="#000"/><rect x="41" y="105" width="45" height="2" fill="#000"/>
</svg>
<div class="t" style="left:882px;top:702px;">Advanced-&gt;</div><div style="left:844px;top:734px;width:485px;height:2px;background:#7d7868"></div>
<div style="left:844px;top:736px;width:486px;height:16px;background:#ece9d8;border-top:1px solid #fff"></div>
<div style="left:1035px;top:737px;width:295px;height:15px;background:#00ff00;border-left:1px solid #606060"></div>
<div style="left:844px;top:751px;width:486px;height:2px;background:#e4ecff"></div>
<div style="left:904px;top:738px;font-family:'Liberation Serif',serif;font-weight:bold;font-size:14px;letter-spacing:0.1px;line-height:16px;white-space:nowrap">Parameters</div>
<div style="left:841px;top:753px;width:493px;height:3px;background:#6a70c8"></div>
<div style="left:841px;top:756px;width:493px;height:2px;background:#505050"></div>

</body></html>
